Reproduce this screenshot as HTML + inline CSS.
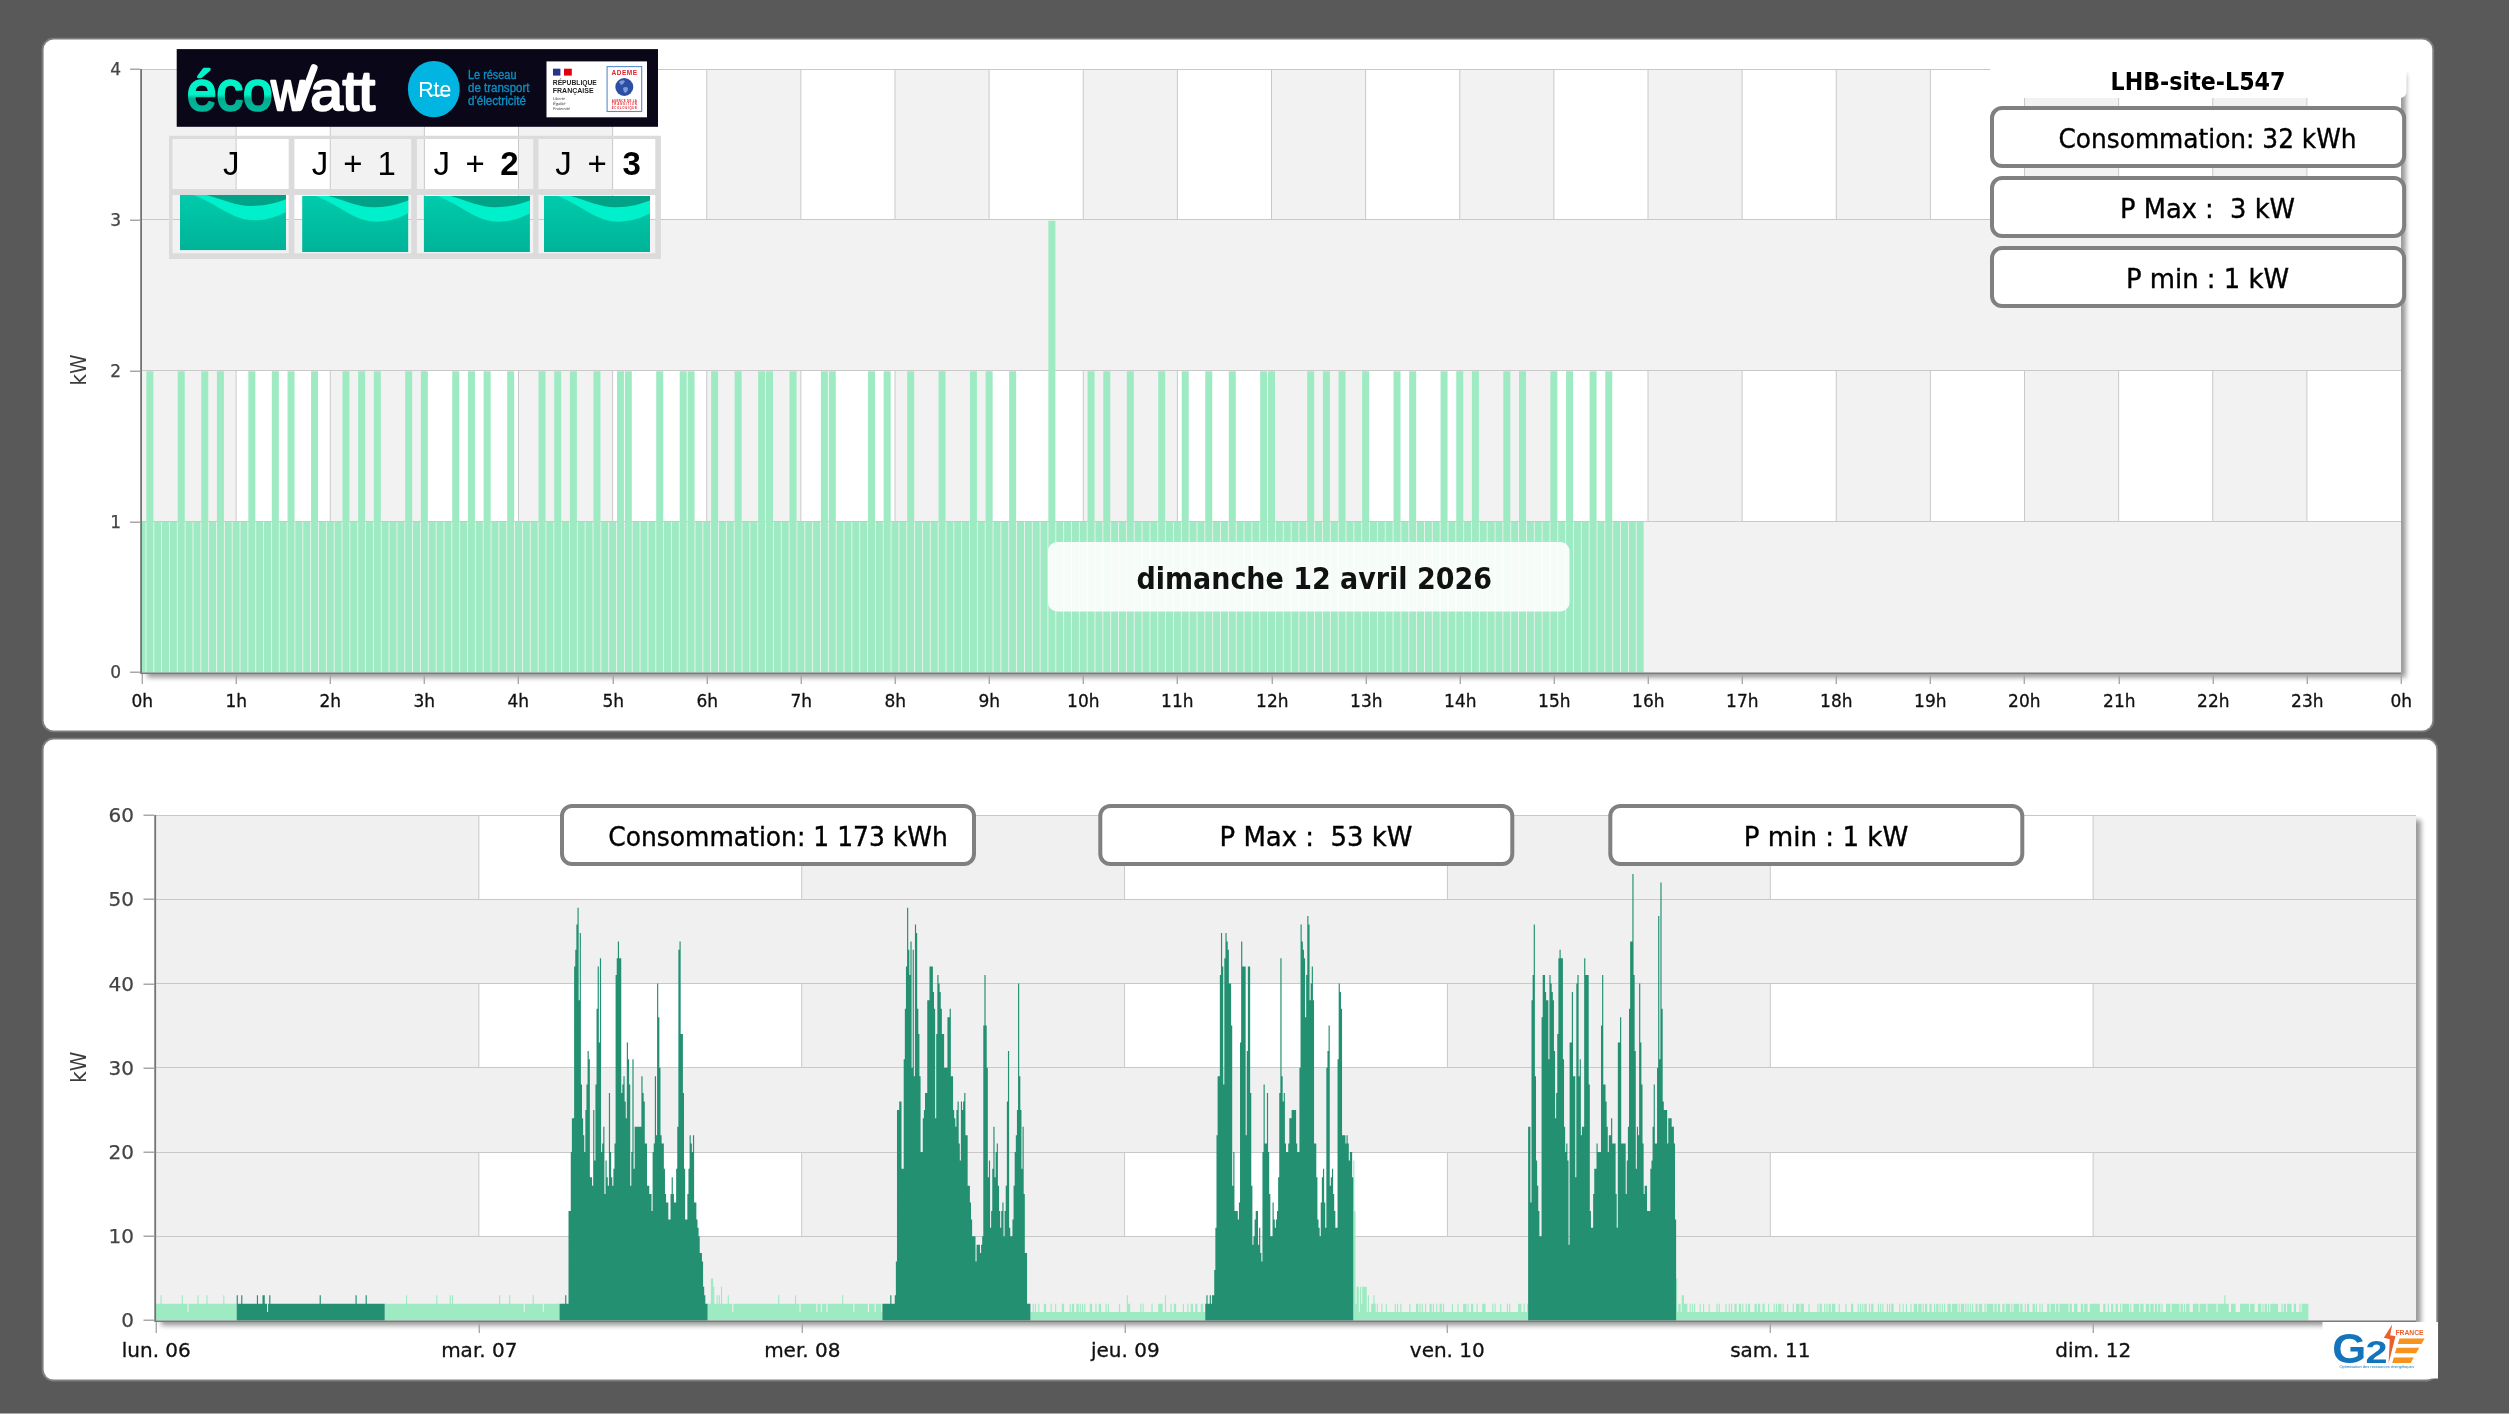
<!DOCTYPE html>
<html lang="fr"><head><meta charset="utf-8"><title>LHB-site-L547</title>
<style>html,body{margin:0;padding:0;background:#fff;overflow:hidden}svg{display:block}text{white-space:pre}</style></head><body>
<svg width="2511" height="1415" viewBox="0 0 2511 1415" style="will-change:transform">
<defs>
<filter id="sh" x="-2%" y="-2%" width="104%" height="106%"><feGaussianBlur in="SourceAlpha" stdDeviation="2.8"/><feOffset dx="4.5" dy="4.5"/><feComponentTransfer><feFuncA type="linear" slope="0.40"/></feComponentTransfer><feMerge><feMergeNode/><feMergeNode in="SourceGraphic"/></feMerge></filter>
<linearGradient id="tg" x1="0" y1="0" x2="0" y2="1"><stop offset="0" stop-color="#00cbab"/><stop offset="1" stop-color="#00b398"/></linearGradient>
<linearGradient id="eg" x1="0" y1="0" x2="0" y2="1"><stop offset="0" stop-color="#00f2c9"/><stop offset="0.55" stop-color="#00f2c9"/><stop offset="0.62" stop-color="#00ad90"/><stop offset="1" stop-color="#00c4a4"/></linearGradient>
<g id="wave"><rect width="106" height="55" fill="url(#tg)"/><path d="M13.5 0 C38 9 52 25.5 75 25.2 C89 25 98 21 106 17 L106 0 Z" fill="#00f0cb"/><path d="M26.5 0 C46 5.5 57 11.3 72 11 C86 10.7 96 8 106 4.3 L106 0 Z" fill="#00a387"/></g>
</defs>
<rect width="2511" height="1415" fill="#fff"/>
<rect width="2509" height="1413.5" fill="#595959"/>
<rect x="41.7" y="37.7" width="2392.5000000000005" height="694.5999999999999" rx="11.8" fill="#7e7e7e"/>
<rect x="43.6" y="39.6" width="2388.7000000000003" height="690.8" rx="10" fill="#fff"/>
<rect x="41.7" y="737.7" width="2396.5000000000005" height="643.7999999999998" rx="11.8" fill="#7e7e7e"/>
<rect x="43.6" y="739.6" width="2392.7000000000003" height="639.9999999999999" rx="10" fill="#fff"/>
<g filter="url(#sh)"><rect x="142.0" y="69.0" width="2259.0" height="603.5" fill="#fff"/></g>
<rect x="142.00" y="69.0" width="94.12" height="603.5" fill="#f2f2f2"/>
<rect x="330.25" y="69.0" width="94.12" height="603.5" fill="#f2f2f2"/>
<rect x="518.50" y="69.0" width="94.12" height="603.5" fill="#f2f2f2"/>
<rect x="706.75" y="69.0" width="94.12" height="603.5" fill="#f2f2f2"/>
<rect x="895.00" y="69.0" width="94.12" height="603.5" fill="#f2f2f2"/>
<rect x="1083.25" y="69.0" width="94.12" height="603.5" fill="#f2f2f2"/>
<rect x="1271.50" y="69.0" width="94.12" height="603.5" fill="#f2f2f2"/>
<rect x="1459.75" y="69.0" width="94.12" height="603.5" fill="#f2f2f2"/>
<rect x="1648.00" y="69.0" width="94.12" height="603.5" fill="#f2f2f2"/>
<rect x="1836.25" y="69.0" width="94.12" height="603.5" fill="#f2f2f2"/>
<rect x="2024.50" y="69.0" width="94.12" height="603.5" fill="#f2f2f2"/>
<rect x="2212.75" y="69.0" width="94.12" height="603.5" fill="#f2f2f2"/>
<path d="M236.12 69.0V672.5M330.25 69.0V672.5M424.38 69.0V672.5M518.50 69.0V672.5M612.62 69.0V672.5M706.75 69.0V672.5M800.88 69.0V672.5M895.00 69.0V672.5M989.12 69.0V672.5M1083.25 69.0V672.5M1177.38 69.0V672.5M1271.50 69.0V672.5M1365.62 69.0V672.5M1459.75 69.0V672.5M1553.88 69.0V672.5M1648.00 69.0V672.5M1742.12 69.0V672.5M1836.25 69.0V672.5M1930.38 69.0V672.5M2024.50 69.0V672.5M2118.62 69.0V672.5M2212.75 69.0V672.5M2306.88 69.0V672.5" stroke="#c9c9c9" stroke-width="1" fill="none"/>
<rect x="142.0" y="219.88" width="2259.0" height="150.88" fill="#f2f2f2"/>
<rect x="142.0" y="521.62" width="2259.0" height="150.88" fill="#f2f2f2"/>
<path d="M142.0 69.5H2401.0M142.0 219.5H2401.0M142.0 370.5H2401.0M142.0 521.5H2401.0" stroke="#c9c9c9" stroke-width="1" fill="none"/>
<path d="M142.00 672.5V521.90H145.50V672.5ZM146.34 672.5V371.30H153.35V672.5ZM154.19 672.5V521.90H161.19V672.5ZM162.03 672.5V521.90H169.03V672.5ZM169.87 672.5V521.90H176.88V672.5ZM177.72 672.5V371.30H184.72V672.5ZM185.56 672.5V521.90H192.56V672.5ZM193.40 672.5V521.90H200.41V672.5ZM201.25 672.5V371.30H208.25V672.5ZM209.09 672.5V521.90H216.10V672.5ZM216.94 672.5V371.30H223.94V672.5ZM224.78 672.5V521.90H231.78V672.5ZM232.62 672.5V521.90H239.63V672.5ZM240.47 672.5V521.90H247.47V672.5ZM248.31 672.5V371.30H255.31V672.5ZM256.15 672.5V521.90H263.16V672.5ZM264.00 672.5V521.90H271.00V672.5ZM271.84 672.5V371.30H278.85V672.5ZM279.69 672.5V521.90H286.69V672.5ZM287.53 672.5V371.30H294.53V672.5ZM295.37 672.5V521.90H302.38V672.5ZM303.22 672.5V521.90H310.22V672.5ZM311.06 672.5V371.30H318.06V672.5ZM318.90 672.5V521.90H325.91V672.5ZM326.75 672.5V521.90H333.75V672.5ZM334.59 672.5V521.90H341.60V672.5ZM342.44 672.5V371.30H349.44V672.5ZM350.28 672.5V521.90H357.28V672.5ZM358.12 672.5V371.30H365.13V672.5ZM365.97 672.5V521.90H372.97V672.5ZM373.81 672.5V371.30H380.81V672.5ZM381.65 672.5V521.90H388.66V672.5ZM389.50 672.5V521.90H396.50V672.5ZM397.34 672.5V521.90H404.35V672.5ZM405.19 672.5V371.30H412.19V672.5ZM413.03 672.5V521.90H420.03V672.5ZM420.87 672.5V371.30H427.88V672.5ZM428.72 672.5V521.90H435.72V672.5ZM436.56 672.5V521.90H443.56V672.5ZM444.40 672.5V521.90H451.41V672.5ZM452.25 672.5V371.30H459.25V672.5ZM460.09 672.5V521.90H467.10V672.5ZM467.94 672.5V371.30H474.94V672.5ZM475.78 672.5V521.90H482.78V672.5ZM483.62 672.5V371.30H490.63V672.5ZM491.47 672.5V521.90H498.47V672.5ZM499.31 672.5V521.90H506.31V672.5ZM507.15 672.5V371.30H514.16V672.5ZM515.00 672.5V521.90H522.00V672.5ZM522.84 672.5V521.90H529.85V672.5ZM530.69 672.5V521.90H537.69V672.5ZM538.53 672.5V371.30H545.53V672.5ZM546.37 672.5V521.90H553.38V672.5ZM554.22 672.5V371.30H561.22V672.5ZM562.06 672.5V521.90H569.06V672.5ZM569.90 672.5V371.30H576.91V672.5ZM577.75 672.5V521.90H584.75V672.5ZM585.59 672.5V521.90H592.60V672.5ZM593.44 672.5V371.30H600.44V672.5ZM601.28 672.5V521.90H608.28V672.5ZM609.12 672.5V521.90H616.13V672.5ZM616.97 672.5V371.30H623.97V672.5ZM624.81 672.5V371.30H631.81V672.5ZM632.65 672.5V521.90H639.66V672.5ZM640.50 672.5V521.90H647.50V672.5ZM648.34 672.5V521.90H655.35V672.5ZM656.19 672.5V371.30H663.19V672.5ZM664.03 672.5V521.90H671.03V672.5ZM671.87 672.5V521.90H678.88V672.5ZM679.72 672.5V371.30H686.72V672.5ZM687.56 672.5V371.30H694.56V672.5ZM695.40 672.5V521.90H702.41V672.5ZM703.25 672.5V521.90H710.25V672.5ZM711.09 672.5V371.30H718.10V672.5ZM718.94 672.5V521.90H725.94V672.5ZM726.78 672.5V521.90H733.78V672.5ZM734.62 672.5V371.30H741.63V672.5ZM742.47 672.5V521.90H749.47V672.5ZM750.31 672.5V521.90H757.31V672.5ZM758.15 672.5V371.30H765.16V672.5ZM766.00 672.5V371.30H773.00V672.5ZM773.84 672.5V521.90H780.85V672.5ZM781.69 672.5V521.90H788.69V672.5ZM789.53 672.5V371.30H796.53V672.5ZM797.37 672.5V521.90H804.38V672.5ZM805.22 672.5V521.90H812.22V672.5ZM813.06 672.5V521.90H820.06V672.5ZM820.90 672.5V371.30H827.91V672.5ZM828.75 672.5V371.30H835.75V672.5ZM836.59 672.5V521.90H843.60V672.5ZM844.44 672.5V521.90H851.44V672.5ZM852.28 672.5V521.90H859.28V672.5ZM860.12 672.5V521.90H867.13V672.5ZM867.97 672.5V371.30H874.97V672.5ZM875.81 672.5V521.90H882.81V672.5ZM883.65 672.5V371.30H890.66V672.5ZM891.50 672.5V521.90H898.50V672.5ZM899.34 672.5V521.90H906.35V672.5ZM907.19 672.5V371.30H914.19V672.5ZM915.03 672.5V521.90H922.03V672.5ZM922.87 672.5V521.90H929.88V672.5ZM930.72 672.5V521.90H937.72V672.5ZM938.56 672.5V371.30H945.56V672.5ZM946.40 672.5V521.90H953.41V672.5ZM954.25 672.5V521.90H961.25V672.5ZM962.09 672.5V521.90H969.10V672.5ZM969.94 672.5V371.30H976.94V672.5ZM977.78 672.5V521.90H984.78V672.5ZM985.62 672.5V371.30H992.63V672.5ZM993.47 672.5V521.90H1000.47V672.5ZM1001.31 672.5V521.90H1008.31V672.5ZM1009.15 672.5V371.30H1016.16V672.5ZM1017.00 672.5V521.90H1024.00V672.5ZM1024.84 672.5V521.90H1031.85V672.5ZM1032.69 672.5V521.90H1039.69V672.5ZM1040.53 672.5V521.90H1047.53V672.5ZM1048.37 672.5V220.70H1055.38V672.5ZM1056.22 672.5V521.90H1063.22V672.5ZM1064.06 672.5V521.90H1071.06V672.5ZM1071.90 672.5V521.90H1078.91V672.5ZM1079.75 672.5V521.90H1086.75V672.5ZM1087.59 672.5V371.30H1094.60V672.5ZM1095.44 672.5V521.90H1102.44V672.5ZM1103.28 672.5V371.30H1110.28V672.5ZM1111.12 672.5V521.90H1118.13V672.5ZM1118.97 672.5V521.90H1125.97V672.5ZM1126.81 672.5V371.30H1133.81V672.5ZM1134.65 672.5V521.90H1141.66V672.5ZM1142.50 672.5V521.90H1149.50V672.5ZM1150.34 672.5V521.90H1157.35V672.5ZM1158.19 672.5V371.30H1165.19V672.5ZM1166.03 672.5V521.90H1173.03V672.5ZM1173.87 672.5V521.90H1180.88V672.5ZM1181.72 672.5V371.30H1188.72V672.5ZM1189.56 672.5V521.90H1196.56V672.5ZM1197.40 672.5V521.90H1204.41V672.5ZM1205.25 672.5V371.30H1212.25V672.5ZM1213.09 672.5V521.90H1220.10V672.5ZM1220.94 672.5V521.90H1227.94V672.5ZM1228.78 672.5V371.30H1235.78V672.5ZM1236.62 672.5V521.90H1243.63V672.5ZM1244.47 672.5V521.90H1251.47V672.5ZM1252.31 672.5V521.90H1259.31V672.5ZM1260.15 672.5V371.30H1267.16V672.5ZM1268.00 672.5V371.30H1275.00V672.5ZM1275.84 672.5V521.90H1282.85V672.5ZM1283.69 672.5V521.90H1290.69V672.5ZM1291.53 672.5V521.90H1298.53V672.5ZM1299.37 672.5V521.90H1306.38V672.5ZM1307.22 672.5V371.30H1314.22V672.5ZM1315.06 672.5V521.90H1322.06V672.5ZM1322.90 672.5V371.30H1329.91V672.5ZM1330.75 672.5V521.90H1337.75V672.5ZM1338.59 672.5V371.30H1345.60V672.5ZM1346.44 672.5V521.90H1353.44V672.5ZM1354.28 672.5V521.90H1361.28V672.5ZM1362.12 672.5V371.30H1369.13V672.5ZM1369.97 672.5V521.90H1376.97V672.5ZM1377.81 672.5V521.90H1384.81V672.5ZM1385.65 672.5V521.90H1392.66V672.5ZM1393.50 672.5V371.30H1400.50V672.5ZM1401.34 672.5V521.90H1408.35V672.5ZM1409.19 672.5V371.30H1416.19V672.5ZM1417.03 672.5V521.90H1424.03V672.5ZM1424.87 672.5V521.90H1431.88V672.5ZM1432.72 672.5V521.90H1439.72V672.5ZM1440.56 672.5V371.30H1447.56V672.5ZM1448.40 672.5V521.90H1455.41V672.5ZM1456.25 672.5V371.30H1463.25V672.5ZM1464.09 672.5V521.90H1471.10V672.5ZM1471.94 672.5V371.30H1478.94V672.5ZM1479.78 672.5V521.90H1486.78V672.5ZM1487.62 672.5V521.90H1494.63V672.5ZM1495.47 672.5V521.90H1502.47V672.5ZM1503.31 672.5V371.30H1510.31V672.5ZM1511.15 672.5V521.90H1518.16V672.5ZM1519.00 672.5V371.30H1526.00V672.5ZM1526.84 672.5V521.90H1533.85V672.5ZM1534.69 672.5V521.90H1541.69V672.5ZM1542.53 672.5V521.90H1549.53V672.5ZM1550.37 672.5V371.30H1557.38V672.5ZM1558.22 672.5V521.90H1565.22V672.5ZM1566.06 672.5V371.30H1573.06V672.5ZM1573.90 672.5V521.90H1580.91V672.5ZM1581.75 672.5V521.90H1588.75V672.5ZM1589.59 672.5V371.30H1596.60V672.5ZM1597.44 672.5V521.90H1604.44V672.5ZM1605.28 672.5V371.30H1612.28V672.5ZM1613.12 672.5V521.90H1620.13V672.5ZM1620.97 672.5V521.90H1627.97V672.5ZM1628.81 672.5V521.90H1635.81V672.5ZM1636.65 672.5V521.90H1643.66V672.5Z" fill="#9eebc3"/>
<path d="M141.1 69.0V673.3" stroke="#737373" stroke-width="1.8" fill="none"/>
<path d="M140.2 673.2H2401.0" stroke="#7a7a7a" stroke-width="1.6" fill="none"/>
<text x="121" y="678.3" text-anchor="end" font-family="DejaVu Sans, Verdana, sans-serif" font-size="17" fill="#444" stroke="#444" stroke-width="0.25">0</text>
<text x="121" y="528.3" text-anchor="end" font-family="DejaVu Sans, Verdana, sans-serif" font-size="17" fill="#444" stroke="#444" stroke-width="0.25">1</text>
<text x="121" y="377.3" text-anchor="end" font-family="DejaVu Sans, Verdana, sans-serif" font-size="17" fill="#444" stroke="#444" stroke-width="0.25">2</text>
<text x="121" y="226.3" text-anchor="end" font-family="DejaVu Sans, Verdana, sans-serif" font-size="17" fill="#444" stroke="#444" stroke-width="0.25">3</text>
<text x="121" y="75.3" text-anchor="end" font-family="DejaVu Sans, Verdana, sans-serif" font-size="17" fill="#444" stroke="#444" stroke-width="0.25">4</text>
<path d="M130.0 672.2H140.2M130.0 522.2H140.2M130.0 371.2H140.2M130.0 220.2H140.2M130.0 69.2H140.2" stroke="#a8a8a8" stroke-width="1.5" fill="none"/>
<text x="142.3" y="707" text-anchor="middle" font-family="DejaVu Sans, Verdana, sans-serif" font-size="17" fill="#111" stroke="#111" stroke-width="0.3">0h</text>
<text x="236.3" y="707" text-anchor="middle" font-family="DejaVu Sans, Verdana, sans-serif" font-size="17" fill="#111" stroke="#111" stroke-width="0.3">1h</text>
<text x="330.3" y="707" text-anchor="middle" font-family="DejaVu Sans, Verdana, sans-serif" font-size="17" fill="#111" stroke="#111" stroke-width="0.3">2h</text>
<text x="424.3" y="707" text-anchor="middle" font-family="DejaVu Sans, Verdana, sans-serif" font-size="17" fill="#111" stroke="#111" stroke-width="0.3">3h</text>
<text x="518.3" y="707" text-anchor="middle" font-family="DejaVu Sans, Verdana, sans-serif" font-size="17" fill="#111" stroke="#111" stroke-width="0.3">4h</text>
<text x="613.3" y="707" text-anchor="middle" font-family="DejaVu Sans, Verdana, sans-serif" font-size="17" fill="#111" stroke="#111" stroke-width="0.3">5h</text>
<text x="707.3" y="707" text-anchor="middle" font-family="DejaVu Sans, Verdana, sans-serif" font-size="17" fill="#111" stroke="#111" stroke-width="0.3">6h</text>
<text x="801.3" y="707" text-anchor="middle" font-family="DejaVu Sans, Verdana, sans-serif" font-size="17" fill="#111" stroke="#111" stroke-width="0.3">7h</text>
<text x="895.3" y="707" text-anchor="middle" font-family="DejaVu Sans, Verdana, sans-serif" font-size="17" fill="#111" stroke="#111" stroke-width="0.3">8h</text>
<text x="989.3" y="707" text-anchor="middle" font-family="DejaVu Sans, Verdana, sans-serif" font-size="17" fill="#111" stroke="#111" stroke-width="0.3">9h</text>
<text x="1083.3" y="707" text-anchor="middle" font-family="DejaVu Sans, Verdana, sans-serif" font-size="17" fill="#111" stroke="#111" stroke-width="0.3">10h</text>
<text x="1177.3" y="707" text-anchor="middle" font-family="DejaVu Sans, Verdana, sans-serif" font-size="17" fill="#111" stroke="#111" stroke-width="0.3">11h</text>
<text x="1272.3" y="707" text-anchor="middle" font-family="DejaVu Sans, Verdana, sans-serif" font-size="17" fill="#111" stroke="#111" stroke-width="0.3">12h</text>
<text x="1366.3" y="707" text-anchor="middle" font-family="DejaVu Sans, Verdana, sans-serif" font-size="17" fill="#111" stroke="#111" stroke-width="0.3">13h</text>
<text x="1460.3" y="707" text-anchor="middle" font-family="DejaVu Sans, Verdana, sans-serif" font-size="17" fill="#111" stroke="#111" stroke-width="0.3">14h</text>
<text x="1554.3" y="707" text-anchor="middle" font-family="DejaVu Sans, Verdana, sans-serif" font-size="17" fill="#111" stroke="#111" stroke-width="0.3">15h</text>
<text x="1648.3" y="707" text-anchor="middle" font-family="DejaVu Sans, Verdana, sans-serif" font-size="17" fill="#111" stroke="#111" stroke-width="0.3">16h</text>
<text x="1742.3" y="707" text-anchor="middle" font-family="DejaVu Sans, Verdana, sans-serif" font-size="17" fill="#111" stroke="#111" stroke-width="0.3">17h</text>
<text x="1836.3" y="707" text-anchor="middle" font-family="DejaVu Sans, Verdana, sans-serif" font-size="17" fill="#111" stroke="#111" stroke-width="0.3">18h</text>
<text x="1930.3" y="707" text-anchor="middle" font-family="DejaVu Sans, Verdana, sans-serif" font-size="17" fill="#111" stroke="#111" stroke-width="0.3">19h</text>
<text x="2024.3" y="707" text-anchor="middle" font-family="DejaVu Sans, Verdana, sans-serif" font-size="17" fill="#111" stroke="#111" stroke-width="0.3">20h</text>
<text x="2119.3" y="707" text-anchor="middle" font-family="DejaVu Sans, Verdana, sans-serif" font-size="17" fill="#111" stroke="#111" stroke-width="0.3">21h</text>
<text x="2213.3" y="707" text-anchor="middle" font-family="DejaVu Sans, Verdana, sans-serif" font-size="17" fill="#111" stroke="#111" stroke-width="0.3">22h</text>
<text x="2307.3" y="707" text-anchor="middle" font-family="DejaVu Sans, Verdana, sans-serif" font-size="17" fill="#111" stroke="#111" stroke-width="0.3">23h</text>
<text x="2401.3" y="707" text-anchor="middle" font-family="DejaVu Sans, Verdana, sans-serif" font-size="17" fill="#111" stroke="#111" stroke-width="0.3">0h</text>
<path d="M142.3 674.0V684.0M236.3 674.0V684.0M330.3 674.0V684.0M424.3 674.0V684.0M518.3 674.0V684.0M613.3 674.0V684.0M707.3 674.0V684.0M801.3 674.0V684.0M895.3 674.0V684.0M989.3 674.0V684.0M1083.3 674.0V684.0M1177.3 674.0V684.0M1272.3 674.0V684.0M1366.3 674.0V684.0M1460.3 674.0V684.0M1554.3 674.0V684.0M1648.3 674.0V684.0M1742.3 674.0V684.0M1836.3 674.0V684.0M1930.3 674.0V684.0M2024.3 674.0V684.0M2119.3 674.0V684.0M2213.3 674.0V684.0M2307.3 674.0V684.0M2401.3 674.0V684.0" stroke="#a8a8a8" stroke-width="1.4" fill="none"/>
<text transform="translate(85.8 370) rotate(-90)" text-anchor="middle" font-family="DejaVu Sans Condensed, DejaVu Sans, Tahoma, sans-serif" font-size="22" textLength="31" lengthAdjust="spacingAndGlyphs" fill="#3c3c3c">kW</text>
<path d="M1990.2 58H2406.5V91Q2406.5 98 2399.5 98H1990.2Z" fill="#fff"/>
<text x="2198" y="89.8" text-anchor="middle" font-family="DejaVu Sans Condensed, DejaVu Sans, Tahoma, sans-serif" font-weight="bold" font-size="25" textLength="175" lengthAdjust="spacingAndGlyphs" fill="#000">LHB-site-L547</text>
<rect x="1992" y="108.1" width="412.0999999999999" height="58.0" rx="10" fill="#fff" stroke="#808080" stroke-width="4"/>
<text x="2207.5" y="148.1" text-anchor="middle" font-family="DejaVu Sans Condensed, DejaVu Sans, Tahoma, sans-serif" font-size="27" textLength="298" lengthAdjust="spacingAndGlyphs" fill="#000" stroke="#000" stroke-width="0.35">Consommation: 32 kWh</text>
<rect x="1992" y="178.1" width="412.0999999999999" height="58.0" rx="10" fill="#fff" stroke="#808080" stroke-width="4"/>
<text x="2207.5" y="218.1" text-anchor="middle" font-family="DejaVu Sans Condensed, DejaVu Sans, Tahoma, sans-serif" font-size="27" textLength="175" lengthAdjust="spacingAndGlyphs" fill="#000" stroke="#000" stroke-width="0.35">P Max :  3 kW</text>
<rect x="1992" y="248.1" width="412.0999999999999" height="58.00000000000003" rx="10" fill="#fff" stroke="#808080" stroke-width="4"/>
<text x="2207.5" y="288.1" text-anchor="middle" font-family="DejaVu Sans Condensed, DejaVu Sans, Tahoma, sans-serif" font-size="27" textLength="163" lengthAdjust="spacingAndGlyphs" fill="#000" stroke="#000" stroke-width="0.35">P min : 1 kW</text>
<rect x="1048" y="542" width="521.5" height="69.5" rx="9" fill="#fff" fill-opacity="0.9"/>
<text x="1314.2" y="589.2" text-anchor="middle" font-family="DejaVu Sans Condensed, DejaVu Sans, Tahoma, sans-serif" font-weight="bold" font-size="30" textLength="355.5" lengthAdjust="spacingAndGlyphs" fill="#111">dimanche 12 avril 2026</text>
<g id="ecowatt">
<rect x="176.7" y="49.1" width="481.3" height="77.7" fill="#0a0818"/>
<text y="110.4" font-family="Liberation Sans, Arial, sans-serif" font-size="55.5" stroke-width="2.6" stroke-linejoin="round" stroke-linecap="round"><tspan x="187" textLength="85.5" lengthAdjust="spacingAndGlyphs" fill="url(#eg)" stroke="url(#eg)">éco</tspan><tspan x="271.3" textLength="33" lengthAdjust="spacingAndGlyphs" fill="#fff" stroke="#fff">w</tspan><tspan x="310.5" textLength="64.5" lengthAdjust="spacingAndGlyphs" fill="#fff" stroke="#fff">att</tspan></text>
<path d="M299.3 107.5L314 67.8" stroke="#fff" stroke-width="7.2" stroke-linecap="round" fill="none"/>
<ellipse cx="433.8" cy="89.1" rx="25.9" ry="28.2" fill="#00b5e2"/>
<text x="418.2" y="96.7" font-family="Liberation Sans, Arial, sans-serif" font-size="22.8" textLength="33" lengthAdjust="spacingAndGlyphs" fill="#fff">Rte</text>
<path d="M430 95.2H450" stroke="#fff" stroke-width="1.3" fill="none"/>
<text x="468" y="78.8" font-family="Liberation Sans, Arial, sans-serif" font-size="12" textLength="48.5" lengthAdjust="spacingAndGlyphs" fill="#0b8fc4" stroke="#0b8fc4" stroke-width="0.35">Le réseau</text>
<text x="468" y="92" font-family="Liberation Sans, Arial, sans-serif" font-size="12" textLength="61.5" lengthAdjust="spacingAndGlyphs" fill="#0b8fc4" stroke="#0b8fc4" stroke-width="0.35">de transport</text>
<text x="468" y="105.2" font-family="Liberation Sans, Arial, sans-serif" font-size="12" textLength="58" lengthAdjust="spacingAndGlyphs" fill="#0b8fc4" stroke="#0b8fc4" stroke-width="0.35">d'électricité</text>
<rect x="546.5" y="61.4" width="100.5" height="55.9" fill="#fff"/>
<rect x="553" y="68.7" width="7.4" height="6.9" fill="#27348b"/><rect x="564" y="68.7" width="7.8" height="6.9" fill="#e1000f"/>
<text x="552.8" y="84.6" font-family="Liberation Sans, Arial, sans-serif" font-weight="bold" font-size="7.4" textLength="44" lengthAdjust="spacingAndGlyphs" fill="#1e1e1e">RÉPUBLIQUE</text>
<text x="552.8" y="93" font-family="Liberation Sans, Arial, sans-serif" font-weight="bold" font-size="7.4" textLength="40.8" lengthAdjust="spacingAndGlyphs" fill="#1e1e1e">FRANÇAISE</text>
<text x="553" y="99.9" font-family="Liberation Sans, Arial, sans-serif" font-style="italic" font-size="4.2" textLength="12" lengthAdjust="spacingAndGlyphs" fill="#444">Liberté</text>
<text x="553" y="104.9" font-family="Liberation Sans, Arial, sans-serif" font-style="italic" font-size="4.2" textLength="12.5" lengthAdjust="spacingAndGlyphs" fill="#444">Égalité</text>
<text x="553" y="109.9" font-family="Liberation Sans, Arial, sans-serif" font-style="italic" font-size="4.2" textLength="17" lengthAdjust="spacingAndGlyphs" fill="#444">Fraternité</text>
<rect x="607.1" y="66.6" width="34.6" height="44.9" fill="#fff" stroke="#5a8bd0" stroke-width="1.1"/>
<text x="624.3" y="74.8" text-anchor="middle" font-family="Liberation Sans, Arial, sans-serif" font-weight="bold" font-size="6.5" textLength="25.5" lengthAdjust="spacing" fill="#e6212a">ADEME</text>
<circle cx="624.3" cy="87" r="9" fill="#2c4fa6"/><path d="M619 82q3-3 6-1q-1 3-4 4zM623 88q3-2 5 0q0 4-3 5q-2-2-2-5z" fill="#7f9ad6"/>
<text x="624.3" y="101.5" text-anchor="middle" font-family="Liberation Sans, Arial, sans-serif" font-weight="bold" font-size="2.9" textLength="25.3" lengthAdjust="spacing" fill="#e6212a">AGENCE DE LA</text>
<text x="624.3" y="105.1" text-anchor="middle" font-family="Liberation Sans, Arial, sans-serif" font-weight="bold" font-size="2.9" textLength="25.3" lengthAdjust="spacing" fill="#e6212a">TRANSITION</text>
<text x="624.3" y="108.6" text-anchor="middle" font-family="Liberation Sans, Arial, sans-serif" font-weight="bold" font-size="2.9" textLength="25.3" lengthAdjust="spacing" fill="#e6212a">ÉCOLOGIQUE</text>
<path d="M169.1 135.7H660.9V258.9H169.1ZM172.5 139.1V189.0H288.7V139.1ZM172.5 195.1V253.2H288.7V195.1ZM294.4 139.1V189.0H411.2V139.1ZM294.4 195.1V253.2H411.2V195.1ZM416.9 139.1V189.0H533.2V139.1ZM416.9 195.1V253.2H533.2V195.1ZM538.4 139.1V189.0H655.3V139.1ZM538.4 195.1V253.2H655.3V195.1Z" fill="#dbdbdb" fill-rule="evenodd"/>
<text x="223" y="174.8" font-family="Liberation Sans, Arial, sans-serif" font-size="33" fill="#000">J</text>
<text x="311.8" y="174.8" font-family="Liberation Sans, Arial, sans-serif" font-size="33" textLength="84" lengthAdjust="spacing" fill="#000">J + <tspan>1</tspan></text>
<text x="433.5" y="174.8" font-family="Liberation Sans, Arial, sans-serif" font-size="33" textLength="85" lengthAdjust="spacing" fill="#000">J + <tspan font-weight="bold">2</tspan></text>
<text x="555.3" y="174.8" font-family="Liberation Sans, Arial, sans-serif" font-size="33" textLength="85.5" lengthAdjust="spacing" fill="#000">J + <tspan font-weight="bold">3</tspan></text>
<use href="#wave" transform="translate(180 195) scale(1 1.0018)"/>
<use href="#wave" transform="translate(302.2 196) scale(1 1.0182)"/>
<use href="#wave" transform="translate(423.9 196) scale(1 1.0182)"/>
<use href="#wave" transform="translate(544 196) scale(1 1.0182)"/>
</g>
<g filter="url(#sh)"><rect x="156.0" y="815.0" width="2260.0" height="505.5" fill="#fff"/></g>
<rect x="156.00" y="815.0" width="322.86" height="505.5" fill="#f0f0f0"/>
<rect x="801.71" y="815.0" width="322.86" height="505.5" fill="#f0f0f0"/>
<rect x="1447.43" y="815.0" width="322.86" height="505.5" fill="#f0f0f0"/>
<rect x="2093.14" y="815.0" width="322.86" height="505.5" fill="#f0f0f0"/>
<path d="M478.86 815.0V1320.5M801.71 815.0V1320.5M1124.57 815.0V1320.5M1447.43 815.0V1320.5M1770.29 815.0V1320.5M2093.14 815.0V1320.5" stroke="#c9c9c9" stroke-width="1" fill="none"/>
<rect x="156.0" y="899.25" width="2260.0" height="84.25" fill="#f0f0f0"/>
<rect x="156.0" y="1067.75" width="2260.0" height="84.25" fill="#f0f0f0"/>
<rect x="156.0" y="1236.25" width="2260.0" height="84.25" fill="#f0f0f0"/>
<path d="M156.0 815.5H2416.0M156.0 899.5H2416.0M156.0 983.5H2416.0M156.0 1067.5H2416.0M156.0 1152.5H2416.0M156.0 1236.5H2416.0" stroke="#c9c9c9" stroke-width="1" fill="none"/>
<path d="M155.98 1320.5V1303.7H157.14V1320.5ZM157.10 1320.5V1303.7H158.26V1320.5ZM158.22 1320.5V1303.7H159.38V1320.5ZM159.34 1320.5V1303.7H160.50V1320.5ZM160.46 1320.5V1295.2H161.63V1320.5ZM161.59 1320.5V1303.7H162.75V1320.5ZM162.71 1320.5V1303.7H163.87V1320.5ZM163.83 1320.5V1303.7H164.99V1320.5ZM164.95 1320.5V1303.7H166.11V1320.5ZM166.07 1320.5V1303.7H167.23V1320.5ZM167.19 1320.5V1303.7H168.35V1320.5ZM168.31 1320.5V1303.7H169.47V1320.5ZM169.43 1320.5V1303.7H170.59V1320.5ZM170.55 1320.5V1303.7H171.71V1320.5ZM171.67 1320.5V1303.7H172.84V1320.5ZM172.80 1320.5V1303.7H173.96V1320.5ZM173.92 1320.5V1303.7H175.08V1320.5ZM175.04 1320.5V1303.7H176.20V1320.5ZM176.16 1320.5V1303.7H177.32V1320.5ZM177.28 1320.5V1303.7H178.44V1320.5ZM178.40 1320.5V1303.7H179.56V1320.5ZM179.52 1320.5V1303.7H180.68V1320.5ZM180.64 1320.5V1303.7H181.80V1320.5ZM181.76 1320.5V1295.2H182.92V1320.5ZM182.88 1320.5V1303.7H184.05V1320.5ZM184.01 1320.5V1303.7H185.17V1320.5ZM185.13 1320.5V1303.7H186.29V1320.5ZM186.25 1320.5V1303.7H187.41V1320.5ZM187.37 1320.5V1312.1H188.53V1320.5ZM188.49 1320.5V1303.7H189.65V1320.5ZM189.61 1320.5V1303.7H190.77V1320.5ZM190.73 1320.5V1303.7H191.89V1320.5ZM191.85 1320.5V1303.7H193.01V1320.5ZM192.97 1320.5V1303.7H194.14V1320.5ZM194.10 1320.5V1303.7H195.26V1320.5ZM195.22 1320.5V1303.7H196.38V1320.5ZM196.34 1320.5V1303.7H197.50V1320.5ZM197.46 1320.5V1295.2H198.62V1320.5ZM198.58 1320.5V1303.7H199.74V1320.5ZM199.70 1320.5V1303.7H200.86V1320.5ZM200.82 1320.5V1303.7H201.98V1320.5ZM201.94 1320.5V1303.7H203.10V1320.5ZM203.06 1320.5V1303.7H204.22V1320.5ZM204.18 1320.5V1303.7H205.35V1320.5ZM205.31 1320.5V1303.7H206.47V1320.5ZM206.43 1320.5V1295.2H207.59V1320.5ZM207.55 1320.5V1303.7H208.71V1320.5ZM208.67 1320.5V1303.7H209.83V1320.5ZM209.79 1320.5V1303.7H210.95V1320.5ZM210.91 1320.5V1303.7H212.07V1320.5ZM212.03 1320.5V1303.7H213.19V1320.5ZM213.15 1320.5V1303.7H214.31V1320.5ZM214.27 1320.5V1303.7H215.43V1320.5ZM215.39 1320.5V1303.7H216.56V1320.5ZM216.52 1320.5V1303.7H217.68V1320.5ZM217.64 1320.5V1303.7H218.80V1320.5ZM218.76 1320.5V1303.7H219.92V1320.5ZM219.88 1320.5V1303.7H221.04V1320.5ZM221.00 1320.5V1303.7H222.16V1320.5ZM222.12 1320.5V1303.7H223.28V1320.5ZM223.24 1320.5V1295.2H224.40V1320.5ZM224.36 1320.5V1303.7H225.52V1320.5ZM225.48 1320.5V1303.7H226.65V1320.5ZM226.60 1320.5V1303.7H227.77V1320.5ZM227.73 1320.5V1303.7H228.89V1320.5ZM228.85 1320.5V1303.7H230.01V1320.5ZM229.97 1320.5V1303.7H231.13V1320.5ZM231.09 1320.5V1303.7H232.25V1320.5ZM232.21 1320.5V1303.7H233.37V1320.5ZM233.33 1320.5V1303.7H234.49V1320.5ZM234.45 1320.5V1303.7H235.61V1320.5ZM235.57 1320.5V1303.7H236.73V1320.5ZM384.67 1320.5V1303.7H385.83V1320.5ZM385.79 1320.5V1303.7H386.95V1320.5ZM386.91 1320.5V1303.7H388.07V1320.5ZM388.03 1320.5V1303.7H389.19V1320.5ZM389.15 1320.5V1303.7H390.32V1320.5ZM390.28 1320.5V1303.7H391.44V1320.5ZM391.40 1320.5V1303.7H392.56V1320.5ZM392.52 1320.5V1303.7H393.68V1320.5ZM393.64 1320.5V1303.7H394.80V1320.5ZM394.76 1320.5V1303.7H395.92V1320.5ZM395.88 1320.5V1303.7H397.04V1320.5ZM397.00 1320.5V1303.7H398.16V1320.5ZM398.12 1320.5V1303.7H399.28V1320.5ZM399.24 1320.5V1303.7H400.40V1320.5ZM400.36 1320.5V1303.7H401.53V1320.5ZM401.49 1320.5V1303.7H402.65V1320.5ZM402.61 1320.5V1303.7H403.77V1320.5ZM403.73 1320.5V1303.7H404.89V1320.5ZM404.85 1320.5V1303.7H406.01V1320.5ZM405.97 1320.5V1295.2H407.13V1320.5ZM407.09 1320.5V1303.7H408.25V1320.5ZM408.21 1320.5V1303.7H409.37V1320.5ZM409.33 1320.5V1303.7H410.49V1320.5ZM410.45 1320.5V1303.7H411.62V1320.5ZM411.58 1320.5V1303.7H412.74V1320.5ZM412.70 1320.5V1303.7H413.86V1320.5ZM413.82 1320.5V1303.7H414.98V1320.5ZM414.94 1320.5V1303.7H416.10V1320.5ZM416.06 1320.5V1303.7H417.22V1320.5ZM417.18 1320.5V1303.7H418.34V1320.5ZM418.30 1320.5V1303.7H419.46V1320.5ZM419.42 1320.5V1303.7H420.58V1320.5ZM420.54 1320.5V1303.7H421.70V1320.5ZM421.66 1320.5V1303.7H422.83V1320.5ZM422.79 1320.5V1303.7H423.95V1320.5ZM423.91 1320.5V1303.7H425.07V1320.5ZM425.03 1320.5V1303.7H426.19V1320.5ZM426.15 1320.5V1303.7H427.31V1320.5ZM427.27 1320.5V1303.7H428.43V1320.5ZM428.39 1320.5V1303.7H429.55V1320.5ZM429.51 1320.5V1303.7H430.67V1320.5ZM430.63 1320.5V1303.7H431.79V1320.5ZM431.75 1320.5V1303.7H432.91V1320.5ZM432.87 1320.5V1303.7H434.04V1320.5ZM434.00 1320.5V1303.7H435.16V1320.5ZM435.12 1320.5V1303.7H436.28V1320.5ZM436.24 1320.5V1295.2H437.40V1320.5ZM437.36 1320.5V1303.7H438.52V1320.5ZM438.48 1320.5V1303.7H439.64V1320.5ZM439.60 1320.5V1303.7H440.76V1320.5ZM440.72 1320.5V1303.7H441.88V1320.5ZM441.84 1320.5V1303.7H443.00V1320.5ZM442.96 1320.5V1303.7H444.13V1320.5ZM444.09 1320.5V1303.7H445.25V1320.5ZM445.21 1320.5V1303.7H446.37V1320.5ZM446.33 1320.5V1303.7H447.49V1320.5ZM447.45 1320.5V1303.7H448.61V1320.5ZM448.57 1320.5V1303.7H449.73V1320.5ZM449.69 1320.5V1295.2H450.85V1320.5ZM450.81 1320.5V1303.7H451.97V1320.5ZM451.93 1320.5V1295.2H453.09V1320.5ZM453.05 1320.5V1303.7H454.21V1320.5ZM454.17 1320.5V1303.7H455.34V1320.5ZM455.30 1320.5V1303.7H456.46V1320.5ZM456.42 1320.5V1303.7H457.58V1320.5ZM457.54 1320.5V1303.7H458.70V1320.5ZM458.66 1320.5V1303.7H459.82V1320.5ZM459.78 1320.5V1303.7H460.94V1320.5ZM460.90 1320.5V1303.7H462.06V1320.5ZM462.02 1320.5V1303.7H463.18V1320.5ZM463.14 1320.5V1303.7H464.30V1320.5ZM464.26 1320.5V1303.7H465.42V1320.5ZM465.38 1320.5V1303.7H466.55V1320.5ZM466.51 1320.5V1303.7H467.67V1320.5ZM467.63 1320.5V1303.7H468.79V1320.5ZM468.75 1320.5V1303.7H469.91V1320.5ZM469.87 1320.5V1303.7H471.03V1320.5ZM470.99 1320.5V1303.7H472.15V1320.5ZM472.11 1320.5V1303.7H473.27V1320.5ZM473.23 1320.5V1303.7H474.39V1320.5ZM474.35 1320.5V1303.7H475.51V1320.5ZM475.47 1320.5V1303.7H476.64V1320.5ZM476.60 1320.5V1303.7H477.76V1320.5ZM477.72 1320.5V1303.7H478.88V1320.5ZM478.84 1320.5V1303.7H480.00V1320.5ZM479.96 1320.5V1303.7H481.12V1320.5ZM481.08 1320.5V1303.7H482.24V1320.5ZM482.20 1320.5V1303.7H483.36V1320.5ZM483.32 1320.5V1303.7H484.48V1320.5ZM484.44 1320.5V1303.7H485.60V1320.5ZM485.56 1320.5V1303.7H486.72V1320.5ZM486.68 1320.5V1303.7H487.85V1320.5ZM487.81 1320.5V1303.7H488.97V1320.5ZM488.93 1320.5V1303.7H490.09V1320.5ZM490.05 1320.5V1303.7H491.21V1320.5ZM491.17 1320.5V1303.7H492.33V1320.5ZM492.29 1320.5V1303.7H493.45V1320.5ZM493.41 1320.5V1303.7H494.57V1320.5ZM494.53 1320.5V1303.7H495.69V1320.5ZM495.65 1320.5V1303.7H496.81V1320.5ZM496.77 1320.5V1303.7H497.93V1320.5ZM497.89 1320.5V1303.7H499.06V1320.5ZM499.02 1320.5V1295.2H500.18V1320.5ZM500.14 1320.5V1303.7H501.30V1320.5ZM501.26 1320.5V1303.7H502.42V1320.5ZM502.38 1320.5V1303.7H503.54V1320.5ZM503.50 1320.5V1303.7H504.66V1320.5ZM504.62 1320.5V1303.7H505.78V1320.5ZM505.74 1320.5V1303.7H506.90V1320.5ZM506.86 1320.5V1303.7H508.02V1320.5ZM507.98 1320.5V1303.7H509.14V1320.5ZM509.11 1320.5V1295.2H510.27V1320.5ZM510.23 1320.5V1303.7H511.39V1320.5ZM511.35 1320.5V1303.7H512.51V1320.5ZM512.47 1320.5V1303.7H513.63V1320.5ZM513.59 1320.5V1303.7H514.75V1320.5ZM514.71 1320.5V1303.7H515.87V1320.5ZM515.83 1320.5V1303.7H516.99V1320.5ZM516.95 1320.5V1303.7H518.11V1320.5ZM518.07 1320.5V1303.7H519.23V1320.5ZM519.19 1320.5V1303.7H520.36V1320.5ZM520.32 1320.5V1303.7H521.48V1320.5ZM521.44 1320.5V1303.7H522.60V1320.5ZM522.56 1320.5V1303.7H523.72V1320.5ZM523.68 1320.5V1312.1H524.84V1320.5ZM524.80 1320.5V1303.7H525.96V1320.5ZM525.92 1320.5V1303.7H527.08V1320.5ZM527.04 1320.5V1303.7H528.20V1320.5ZM528.16 1320.5V1303.7H529.32V1320.5ZM529.28 1320.5V1303.7H530.44V1320.5ZM530.40 1320.5V1303.7H531.57V1320.5ZM531.53 1320.5V1303.7H532.69V1320.5ZM532.65 1320.5V1295.2H533.81V1320.5ZM533.77 1320.5V1303.7H534.93V1320.5ZM534.89 1320.5V1303.7H536.05V1320.5ZM536.01 1320.5V1303.7H537.17V1320.5ZM537.13 1320.5V1303.7H538.29V1320.5ZM538.25 1320.5V1303.7H539.41V1320.5ZM539.37 1320.5V1303.7H540.53V1320.5ZM540.49 1320.5V1303.7H541.65V1320.5ZM541.61 1320.5V1303.7H542.78V1320.5ZM542.74 1320.5V1312.1H543.90V1320.5ZM543.86 1320.5V1303.7H545.02V1320.5ZM544.98 1320.5V1303.7H546.14V1320.5ZM546.10 1320.5V1303.7H547.26V1320.5ZM547.22 1320.5V1303.7H548.38V1320.5ZM548.34 1320.5V1303.7H549.50V1320.5ZM549.46 1320.5V1303.7H550.62V1320.5ZM550.58 1320.5V1303.7H551.74V1320.5ZM551.70 1320.5V1303.7H552.87V1320.5ZM552.83 1320.5V1303.7H553.99V1320.5ZM553.95 1320.5V1303.7H555.11V1320.5ZM555.07 1320.5V1303.7H556.23V1320.5ZM556.19 1320.5V1303.7H557.35V1320.5ZM557.31 1320.5V1303.7H558.47V1320.5ZM558.43 1320.5V1303.7H559.59V1320.5ZM707.53 1320.5V1303.7H708.69V1320.5ZM708.65 1320.5V1303.7H709.81V1320.5ZM709.77 1320.5V1303.7H710.93V1320.5ZM710.89 1320.5V1278.4H712.05V1320.5ZM712.01 1320.5V1278.4H713.17V1320.5ZM713.13 1320.5V1286.8H714.29V1320.5ZM714.25 1320.5V1303.7H715.41V1320.5ZM715.37 1320.5V1303.7H716.54V1320.5ZM716.50 1320.5V1295.2H717.66V1320.5ZM717.62 1320.5V1303.7H718.78V1320.5ZM718.74 1320.5V1295.2H719.90V1320.5ZM719.86 1320.5V1303.7H721.02V1320.5ZM720.98 1320.5V1286.8H722.14V1320.5ZM722.10 1320.5V1303.7H723.26V1320.5ZM723.22 1320.5V1303.7H724.38V1320.5ZM724.34 1320.5V1303.7H725.50V1320.5ZM725.46 1320.5V1303.7H726.63V1320.5ZM726.59 1320.5V1303.7H727.75V1320.5ZM727.71 1320.5V1295.2H728.87V1320.5ZM728.83 1320.5V1303.7H729.99V1320.5ZM729.95 1320.5V1303.7H731.11V1320.5ZM731.07 1320.5V1303.7H732.23V1320.5ZM732.19 1320.5V1312.1H733.35V1320.5ZM733.31 1320.5V1303.7H734.47V1320.5ZM734.43 1320.5V1303.7H735.59V1320.5ZM735.55 1320.5V1303.7H736.71V1320.5ZM736.67 1320.5V1303.7H737.84V1320.5ZM737.80 1320.5V1303.7H738.96V1320.5ZM738.92 1320.5V1303.7H740.08V1320.5ZM740.04 1320.5V1303.7H741.20V1320.5ZM741.16 1320.5V1303.7H742.32V1320.5ZM742.28 1320.5V1303.7H743.44V1320.5ZM743.40 1320.5V1303.7H744.56V1320.5ZM744.52 1320.5V1303.7H745.68V1320.5ZM745.64 1320.5V1303.7H746.80V1320.5ZM746.76 1320.5V1303.7H747.92V1320.5ZM747.88 1320.5V1303.7H749.05V1320.5ZM749.01 1320.5V1303.7H750.17V1320.5ZM750.13 1320.5V1303.7H751.29V1320.5ZM751.25 1320.5V1303.7H752.41V1320.5ZM752.37 1320.5V1303.7H753.53V1320.5ZM753.49 1320.5V1303.7H754.65V1320.5ZM754.61 1320.5V1303.7H755.77V1320.5ZM755.73 1320.5V1303.7H756.89V1320.5ZM756.85 1320.5V1303.7H758.01V1320.5ZM757.97 1320.5V1303.7H759.14V1320.5ZM759.10 1320.5V1303.7H760.26V1320.5ZM760.22 1320.5V1303.7H761.38V1320.5ZM761.34 1320.5V1303.7H762.50V1320.5ZM762.46 1320.5V1303.7H763.62V1320.5ZM763.58 1320.5V1303.7H764.74V1320.5ZM764.70 1320.5V1303.7H765.86V1320.5ZM765.82 1320.5V1303.7H766.98V1320.5ZM766.94 1320.5V1303.7H768.10V1320.5ZM768.06 1320.5V1303.7H769.22V1320.5ZM769.18 1320.5V1303.7H770.35V1320.5ZM770.31 1320.5V1303.7H771.47V1320.5ZM771.43 1320.5V1303.7H772.59V1320.5ZM772.55 1320.5V1303.7H773.71V1320.5ZM773.67 1320.5V1303.7H774.83V1320.5ZM774.79 1320.5V1303.7H775.95V1320.5ZM775.91 1320.5V1303.7H777.07V1320.5ZM777.03 1320.5V1303.7H778.19V1320.5ZM778.15 1320.5V1295.2H779.31V1320.5ZM779.27 1320.5V1303.7H780.43V1320.5ZM780.39 1320.5V1303.7H781.56V1320.5ZM781.52 1320.5V1303.7H782.68V1320.5ZM782.64 1320.5V1303.7H783.80V1320.5ZM783.76 1320.5V1303.7H784.92V1320.5ZM784.88 1320.5V1303.7H786.04V1320.5ZM786.00 1320.5V1303.7H787.16V1320.5ZM787.12 1320.5V1303.7H788.28V1320.5ZM788.24 1320.5V1303.7H789.40V1320.5ZM789.36 1320.5V1303.7H790.52V1320.5ZM790.48 1320.5V1303.7H791.64V1320.5ZM791.61 1320.5V1303.7H792.77V1320.5ZM792.73 1320.5V1303.7H793.89V1320.5ZM793.85 1320.5V1303.7H795.01V1320.5ZM794.97 1320.5V1295.2H796.13V1320.5ZM796.09 1320.5V1303.7H797.25V1320.5ZM797.21 1320.5V1303.7H798.37V1320.5ZM798.33 1320.5V1303.7H799.49V1320.5ZM799.45 1320.5V1312.1H800.61V1320.5ZM800.57 1320.5V1303.7H801.73V1320.5ZM801.69 1320.5V1303.7H802.86V1320.5ZM802.82 1320.5V1303.7H803.98V1320.5ZM803.94 1320.5V1303.7H805.10V1320.5ZM805.06 1320.5V1303.7H806.22V1320.5ZM806.18 1320.5V1303.7H807.34V1320.5ZM807.30 1320.5V1303.7H808.46V1320.5ZM808.42 1320.5V1303.7H809.58V1320.5ZM809.54 1320.5V1303.7H810.70V1320.5ZM810.66 1320.5V1303.7H811.82V1320.5ZM811.78 1320.5V1303.7H812.94V1320.5ZM812.90 1320.5V1303.7H814.07V1320.5ZM814.03 1320.5V1303.7H815.19V1320.5ZM815.15 1320.5V1303.7H816.31V1320.5ZM816.27 1320.5V1312.1H817.43V1320.5ZM817.39 1320.5V1303.7H818.55V1320.5ZM818.51 1320.5V1303.7H819.67V1320.5ZM819.63 1320.5V1303.7H820.79V1320.5ZM820.75 1320.5V1312.1H821.91V1320.5ZM821.87 1320.5V1303.7H823.03V1320.5ZM822.99 1320.5V1303.7H824.15V1320.5ZM824.11 1320.5V1303.7H825.28V1320.5ZM825.24 1320.5V1303.7H826.40V1320.5ZM826.36 1320.5V1312.1H827.52V1320.5ZM827.48 1320.5V1303.7H828.64V1320.5ZM828.60 1320.5V1303.7H829.76V1320.5ZM829.72 1320.5V1303.7H830.88V1320.5ZM830.84 1320.5V1303.7H832.00V1320.5ZM831.96 1320.5V1303.7H833.12V1320.5ZM833.08 1320.5V1303.7H834.24V1320.5ZM834.20 1320.5V1303.7H835.37V1320.5ZM835.33 1320.5V1303.7H836.49V1320.5ZM836.45 1320.5V1303.7H837.61V1320.5ZM837.57 1320.5V1303.7H838.73V1320.5ZM838.69 1320.5V1303.7H839.85V1320.5ZM839.81 1320.5V1303.7H840.97V1320.5ZM840.93 1320.5V1303.7H842.09V1320.5ZM842.05 1320.5V1295.2H843.21V1320.5ZM843.17 1320.5V1303.7H844.33V1320.5ZM844.29 1320.5V1303.7H845.45V1320.5ZM845.41 1320.5V1303.7H846.58V1320.5ZM846.54 1320.5V1303.7H847.70V1320.5ZM847.66 1320.5V1303.7H848.82V1320.5ZM848.78 1320.5V1303.7H849.94V1320.5ZM849.90 1320.5V1303.7H851.06V1320.5ZM851.02 1320.5V1303.7H852.18V1320.5ZM852.14 1320.5V1303.7H853.30V1320.5ZM853.26 1320.5V1312.1H854.42V1320.5ZM854.38 1320.5V1303.7H855.54V1320.5ZM855.50 1320.5V1303.7H856.66V1320.5ZM856.62 1320.5V1303.7H857.79V1320.5ZM857.75 1320.5V1303.7H858.91V1320.5ZM858.87 1320.5V1303.7H860.03V1320.5ZM859.99 1320.5V1303.7H861.15V1320.5ZM861.11 1320.5V1303.7H862.27V1320.5ZM862.23 1320.5V1303.7H863.39V1320.5ZM863.35 1320.5V1303.7H864.51V1320.5ZM864.47 1320.5V1303.7H865.63V1320.5ZM865.59 1320.5V1303.7H866.75V1320.5ZM866.71 1320.5V1303.7H867.88V1320.5ZM867.84 1320.5V1312.1H869.00V1320.5ZM868.96 1320.5V1303.7H870.12V1320.5ZM870.08 1320.5V1303.7H871.24V1320.5ZM871.20 1320.5V1303.7H872.36V1320.5ZM872.32 1320.5V1303.7H873.48V1320.5ZM873.44 1320.5V1303.7H874.60V1320.5ZM874.56 1320.5V1312.1H875.72V1320.5ZM875.68 1320.5V1303.7H876.84V1320.5ZM876.80 1320.5V1303.7H877.96V1320.5ZM877.92 1320.5V1303.7H879.09V1320.5ZM879.05 1320.5V1303.7H880.21V1320.5ZM880.17 1320.5V1303.7H881.33V1320.5ZM881.29 1320.5V1312.1H882.45V1320.5ZM1030.38 1320.5V1312.1H1031.55V1320.5ZM1031.51 1320.5V1312.1H1032.67V1320.5ZM1032.63 1320.5V1303.7H1033.79V1320.5ZM1033.75 1320.5V1312.1H1034.91V1320.5ZM1034.87 1320.5V1303.7H1036.03V1320.5ZM1035.99 1320.5V1312.1H1037.15V1320.5ZM1037.11 1320.5V1312.1H1038.27V1320.5ZM1038.23 1320.5V1303.7H1039.39V1320.5ZM1039.35 1320.5V1312.1H1040.51V1320.5ZM1040.47 1320.5V1312.1H1041.64V1320.5ZM1041.60 1320.5V1312.1H1042.76V1320.5ZM1042.72 1320.5V1312.1H1043.88V1320.5ZM1043.84 1320.5V1303.7H1045.00V1320.5ZM1044.96 1320.5V1303.7H1046.12V1320.5ZM1046.08 1320.5V1312.1H1047.24V1320.5ZM1047.20 1320.5V1312.1H1048.36V1320.5ZM1048.32 1320.5V1312.1H1049.48V1320.5ZM1049.44 1320.5V1312.1H1050.60V1320.5ZM1050.56 1320.5V1303.7H1051.72V1320.5ZM1051.68 1320.5V1312.1H1052.85V1320.5ZM1052.81 1320.5V1312.1H1053.97V1320.5ZM1053.93 1320.5V1312.1H1055.09V1320.5ZM1055.05 1320.5V1303.7H1056.21V1320.5ZM1056.17 1320.5V1312.1H1057.33V1320.5ZM1057.29 1320.5V1312.1H1058.45V1320.5ZM1058.41 1320.5V1312.1H1059.57V1320.5ZM1059.53 1320.5V1312.1H1060.69V1320.5ZM1060.65 1320.5V1312.1H1061.81V1320.5ZM1061.77 1320.5V1303.7H1062.93V1320.5ZM1062.89 1320.5V1303.7H1064.06V1320.5ZM1064.02 1320.5V1312.1H1065.18V1320.5ZM1065.14 1320.5V1312.1H1066.30V1320.5ZM1066.26 1320.5V1312.1H1067.42V1320.5ZM1067.38 1320.5V1312.1H1068.54V1320.5ZM1068.50 1320.5V1312.1H1069.66V1320.5ZM1069.62 1320.5V1303.7H1070.78V1320.5ZM1070.74 1320.5V1312.1H1071.90V1320.5ZM1071.86 1320.5V1303.7H1073.02V1320.5ZM1072.98 1320.5V1303.7H1074.14V1320.5ZM1074.11 1320.5V1312.1H1075.27V1320.5ZM1075.23 1320.5V1312.1H1076.39V1320.5ZM1076.35 1320.5V1303.7H1077.51V1320.5ZM1077.47 1320.5V1303.7H1078.63V1320.5ZM1078.59 1320.5V1312.1H1079.75V1320.5ZM1079.71 1320.5V1303.7H1080.87V1320.5ZM1080.83 1320.5V1312.1H1081.99V1320.5ZM1081.95 1320.5V1303.7H1083.11V1320.5ZM1083.07 1320.5V1312.1H1084.23V1320.5ZM1084.19 1320.5V1303.7H1085.36V1320.5ZM1085.32 1320.5V1312.1H1086.48V1320.5ZM1086.44 1320.5V1312.1H1087.60V1320.5ZM1087.56 1320.5V1312.1H1088.72V1320.5ZM1088.68 1320.5V1312.1H1089.84V1320.5ZM1089.80 1320.5V1303.7H1090.96V1320.5ZM1090.92 1320.5V1303.7H1092.08V1320.5ZM1092.04 1320.5V1312.1H1093.20V1320.5ZM1093.16 1320.5V1312.1H1094.32V1320.5ZM1094.28 1320.5V1312.1H1095.44V1320.5ZM1095.40 1320.5V1303.7H1096.57V1320.5ZM1096.53 1320.5V1312.1H1097.69V1320.5ZM1097.65 1320.5V1312.1H1098.81V1320.5ZM1098.77 1320.5V1303.7H1099.93V1320.5ZM1099.89 1320.5V1303.7H1101.05V1320.5ZM1101.01 1320.5V1312.1H1102.17V1320.5ZM1102.13 1320.5V1312.1H1103.29V1320.5ZM1103.25 1320.5V1312.1H1104.41V1320.5ZM1104.37 1320.5V1312.1H1105.53V1320.5ZM1105.49 1320.5V1303.7H1106.65V1320.5ZM1106.61 1320.5V1312.1H1107.78V1320.5ZM1107.74 1320.5V1303.7H1108.90V1320.5ZM1108.86 1320.5V1312.1H1110.02V1320.5ZM1109.98 1320.5V1312.1H1111.14V1320.5ZM1111.10 1320.5V1312.1H1112.26V1320.5ZM1112.22 1320.5V1312.1H1113.38V1320.5ZM1113.34 1320.5V1312.1H1114.50V1320.5ZM1114.46 1320.5V1312.1H1115.62V1320.5ZM1115.58 1320.5V1312.1H1116.74V1320.5ZM1116.70 1320.5V1312.1H1117.87V1320.5ZM1117.83 1320.5V1312.1H1118.99V1320.5ZM1118.95 1320.5V1303.7H1120.11V1320.5ZM1120.07 1320.5V1312.1H1121.23V1320.5ZM1121.19 1320.5V1312.1H1122.35V1320.5ZM1122.31 1320.5V1312.1H1123.47V1320.5ZM1123.43 1320.5V1312.1H1124.59V1320.5ZM1124.55 1320.5V1312.1H1125.71V1320.5ZM1125.67 1320.5V1312.1H1126.83V1320.5ZM1126.79 1320.5V1295.2H1127.95V1320.5ZM1127.91 1320.5V1303.7H1129.08V1320.5ZM1129.04 1320.5V1303.7H1130.20V1320.5ZM1130.16 1320.5V1312.1H1131.32V1320.5ZM1131.28 1320.5V1312.1H1132.44V1320.5ZM1132.40 1320.5V1312.1H1133.56V1320.5ZM1133.52 1320.5V1312.1H1134.68V1320.5ZM1134.64 1320.5V1312.1H1135.80V1320.5ZM1135.76 1320.5V1312.1H1136.92V1320.5ZM1136.88 1320.5V1312.1H1138.04V1320.5ZM1138.00 1320.5V1312.1H1139.16V1320.5ZM1139.12 1320.5V1312.1H1140.29V1320.5ZM1140.25 1320.5V1303.7H1141.41V1320.5ZM1141.37 1320.5V1312.1H1142.53V1320.5ZM1142.49 1320.5V1303.7H1143.65V1320.5ZM1143.61 1320.5V1312.1H1144.77V1320.5ZM1144.73 1320.5V1312.1H1145.89V1320.5ZM1145.85 1320.5V1312.1H1147.01V1320.5ZM1146.97 1320.5V1312.1H1148.13V1320.5ZM1148.09 1320.5V1312.1H1149.25V1320.5ZM1149.21 1320.5V1312.1H1150.38V1320.5ZM1150.34 1320.5V1312.1H1151.50V1320.5ZM1151.46 1320.5V1303.7H1152.62V1320.5ZM1152.58 1320.5V1312.1H1153.74V1320.5ZM1153.70 1320.5V1312.1H1154.86V1320.5ZM1154.82 1320.5V1312.1H1155.98V1320.5ZM1155.94 1320.5V1312.1H1157.10V1320.5ZM1157.06 1320.5V1312.1H1158.22V1320.5ZM1158.18 1320.5V1303.7H1159.34V1320.5ZM1159.30 1320.5V1303.7H1160.46V1320.5ZM1160.42 1320.5V1303.7H1161.59V1320.5ZM1161.55 1320.5V1303.7H1162.71V1320.5ZM1162.67 1320.5V1312.1H1163.83V1320.5ZM1163.79 1320.5V1312.1H1164.95V1320.5ZM1164.91 1320.5V1295.2H1166.07V1320.5ZM1166.03 1320.5V1312.1H1167.19V1320.5ZM1167.15 1320.5V1312.1H1168.31V1320.5ZM1168.27 1320.5V1312.1H1169.43V1320.5ZM1169.39 1320.5V1312.1H1170.55V1320.5ZM1170.51 1320.5V1303.7H1171.67V1320.5ZM1171.63 1320.5V1312.1H1172.80V1320.5ZM1172.76 1320.5V1312.1H1173.92V1320.5ZM1173.88 1320.5V1303.7H1175.04V1320.5ZM1175.00 1320.5V1303.7H1176.16V1320.5ZM1176.12 1320.5V1312.1H1177.28V1320.5ZM1177.24 1320.5V1312.1H1178.40V1320.5ZM1178.36 1320.5V1312.1H1179.52V1320.5ZM1179.48 1320.5V1312.1H1180.64V1320.5ZM1180.60 1320.5V1312.1H1181.76V1320.5ZM1181.72 1320.5V1312.1H1182.89V1320.5ZM1182.85 1320.5V1303.7H1184.01V1320.5ZM1183.97 1320.5V1312.1H1185.13V1320.5ZM1185.09 1320.5V1312.1H1186.25V1320.5ZM1186.21 1320.5V1312.1H1187.37V1320.5ZM1187.33 1320.5V1303.7H1188.49V1320.5ZM1188.45 1320.5V1312.1H1189.61V1320.5ZM1189.57 1320.5V1312.1H1190.73V1320.5ZM1190.69 1320.5V1303.7H1191.85V1320.5ZM1191.81 1320.5V1303.7H1192.97V1320.5ZM1192.93 1320.5V1312.1H1194.10V1320.5ZM1194.06 1320.5V1312.1H1195.22V1320.5ZM1195.18 1320.5V1303.7H1196.34V1320.5ZM1196.30 1320.5V1303.7H1197.46V1320.5ZM1197.42 1320.5V1312.1H1198.58V1320.5ZM1198.54 1320.5V1312.1H1199.70V1320.5ZM1199.66 1320.5V1312.1H1200.82V1320.5ZM1200.78 1320.5V1303.7H1201.94V1320.5ZM1201.90 1320.5V1303.7H1203.06V1320.5ZM1203.02 1320.5V1312.1H1204.18V1320.5ZM1204.14 1320.5V1312.1H1205.31V1320.5ZM1353.24 1320.5V1160.4H1354.40V1320.5ZM1354.36 1320.5V1211.0H1355.52V1320.5ZM1355.48 1320.5V1303.7H1356.64V1320.5ZM1356.61 1320.5V1286.8H1357.77V1320.5ZM1357.73 1320.5V1286.8H1358.89V1320.5ZM1358.85 1320.5V1312.1H1360.01V1320.5ZM1359.97 1320.5V1286.8H1361.13V1320.5ZM1361.09 1320.5V1303.7H1362.25V1320.5ZM1362.21 1320.5V1286.8H1363.37V1320.5ZM1363.33 1320.5V1286.8H1364.49V1320.5ZM1364.45 1320.5V1286.8H1365.61V1320.5ZM1365.57 1320.5V1286.8H1366.73V1320.5ZM1366.69 1320.5V1312.1H1367.86V1320.5ZM1367.82 1320.5V1295.2H1368.98V1320.5ZM1368.94 1320.5V1312.1H1370.10V1320.5ZM1370.06 1320.5V1312.1H1371.22V1320.5ZM1371.18 1320.5V1303.7H1372.34V1320.5ZM1372.30 1320.5V1303.7H1373.46V1320.5ZM1373.42 1320.5V1295.2H1374.58V1320.5ZM1374.54 1320.5V1303.7H1375.70V1320.5ZM1375.66 1320.5V1312.1H1376.82V1320.5ZM1376.78 1320.5V1303.7H1377.94V1320.5ZM1377.90 1320.5V1312.1H1379.07V1320.5ZM1379.03 1320.5V1312.1H1380.19V1320.5ZM1380.15 1320.5V1312.1H1381.31V1320.5ZM1381.27 1320.5V1303.7H1382.43V1320.5ZM1382.39 1320.5V1312.1H1383.55V1320.5ZM1383.51 1320.5V1312.1H1384.67V1320.5ZM1384.63 1320.5V1312.1H1385.79V1320.5ZM1385.75 1320.5V1303.7H1386.91V1320.5ZM1386.87 1320.5V1312.1H1388.03V1320.5ZM1387.99 1320.5V1312.1H1389.15V1320.5ZM1389.11 1320.5V1312.1H1390.28V1320.5ZM1390.24 1320.5V1312.1H1391.40V1320.5ZM1391.36 1320.5V1312.1H1392.52V1320.5ZM1392.48 1320.5V1312.1H1393.64V1320.5ZM1393.60 1320.5V1312.1H1394.76V1320.5ZM1394.72 1320.5V1303.7H1395.88V1320.5ZM1395.84 1320.5V1312.1H1397.00V1320.5ZM1396.96 1320.5V1303.7H1398.12V1320.5ZM1398.08 1320.5V1312.1H1399.24V1320.5ZM1399.20 1320.5V1312.1H1400.37V1320.5ZM1400.33 1320.5V1303.7H1401.49V1320.5ZM1401.45 1320.5V1312.1H1402.61V1320.5ZM1402.57 1320.5V1312.1H1403.73V1320.5ZM1403.69 1320.5V1312.1H1404.85V1320.5ZM1404.81 1320.5V1312.1H1405.97V1320.5ZM1405.93 1320.5V1312.1H1407.09V1320.5ZM1407.05 1320.5V1312.1H1408.21V1320.5ZM1408.17 1320.5V1312.1H1409.33V1320.5ZM1409.29 1320.5V1303.7H1410.45V1320.5ZM1410.41 1320.5V1312.1H1411.58V1320.5ZM1411.54 1320.5V1312.1H1412.70V1320.5ZM1412.66 1320.5V1312.1H1413.82V1320.5ZM1413.78 1320.5V1312.1H1414.94V1320.5ZM1414.90 1320.5V1312.1H1416.06V1320.5ZM1416.02 1320.5V1303.7H1417.18V1320.5ZM1417.14 1320.5V1303.7H1418.30V1320.5ZM1418.26 1320.5V1312.1H1419.42V1320.5ZM1419.38 1320.5V1303.7H1420.54V1320.5ZM1420.50 1320.5V1312.1H1421.66V1320.5ZM1421.62 1320.5V1303.7H1422.79V1320.5ZM1422.75 1320.5V1312.1H1423.91V1320.5ZM1423.87 1320.5V1312.1H1425.03V1320.5ZM1424.99 1320.5V1303.7H1426.15V1320.5ZM1426.11 1320.5V1312.1H1427.27V1320.5ZM1427.23 1320.5V1312.1H1428.39V1320.5ZM1428.35 1320.5V1312.1H1429.51V1320.5ZM1429.47 1320.5V1303.7H1430.63V1320.5ZM1430.59 1320.5V1303.7H1431.75V1320.5ZM1431.71 1320.5V1312.1H1432.88V1320.5ZM1432.84 1320.5V1303.7H1434.00V1320.5ZM1433.96 1320.5V1312.1H1435.12V1320.5ZM1435.08 1320.5V1312.1H1436.24V1320.5ZM1436.20 1320.5V1303.7H1437.36V1320.5ZM1437.32 1320.5V1312.1H1438.48V1320.5ZM1438.44 1320.5V1312.1H1439.60V1320.5ZM1439.56 1320.5V1303.7H1440.72V1320.5ZM1440.68 1320.5V1303.7H1441.84V1320.5ZM1441.80 1320.5V1312.1H1442.96V1320.5ZM1442.92 1320.5V1303.7H1444.09V1320.5ZM1444.05 1320.5V1312.1H1445.21V1320.5ZM1445.17 1320.5V1312.1H1446.33V1320.5ZM1446.29 1320.5V1312.1H1447.45V1320.5ZM1447.41 1320.5V1312.1H1448.57V1320.5ZM1448.53 1320.5V1312.1H1449.69V1320.5ZM1449.65 1320.5V1312.1H1450.81V1320.5ZM1450.77 1320.5V1312.1H1451.93V1320.5ZM1451.89 1320.5V1303.7H1453.05V1320.5ZM1453.01 1320.5V1312.1H1454.17V1320.5ZM1454.13 1320.5V1312.1H1455.30V1320.5ZM1455.26 1320.5V1312.1H1456.42V1320.5ZM1456.38 1320.5V1312.1H1457.54V1320.5ZM1457.50 1320.5V1303.7H1458.66V1320.5ZM1458.62 1320.5V1312.1H1459.78V1320.5ZM1459.74 1320.5V1312.1H1460.90V1320.5ZM1460.86 1320.5V1312.1H1462.02V1320.5ZM1461.98 1320.5V1312.1H1463.14V1320.5ZM1463.10 1320.5V1303.7H1464.26V1320.5ZM1464.22 1320.5V1303.7H1465.39V1320.5ZM1465.35 1320.5V1303.7H1466.51V1320.5ZM1466.47 1320.5V1312.1H1467.63V1320.5ZM1467.59 1320.5V1303.7H1468.75V1320.5ZM1468.71 1320.5V1312.1H1469.87V1320.5ZM1469.83 1320.5V1312.1H1470.99V1320.5ZM1470.95 1320.5V1303.7H1472.11V1320.5ZM1472.07 1320.5V1303.7H1473.23V1320.5ZM1473.19 1320.5V1312.1H1474.35V1320.5ZM1474.31 1320.5V1312.1H1475.47V1320.5ZM1475.43 1320.5V1312.1H1476.60V1320.5ZM1476.56 1320.5V1303.7H1477.72V1320.5ZM1477.68 1320.5V1312.1H1478.84V1320.5ZM1478.80 1320.5V1312.1H1479.96V1320.5ZM1479.92 1320.5V1312.1H1481.08V1320.5ZM1481.04 1320.5V1312.1H1482.20V1320.5ZM1482.16 1320.5V1303.7H1483.32V1320.5ZM1483.28 1320.5V1303.7H1484.44V1320.5ZM1484.40 1320.5V1303.7H1485.56V1320.5ZM1485.52 1320.5V1312.1H1486.68V1320.5ZM1486.64 1320.5V1312.1H1487.81V1320.5ZM1487.77 1320.5V1312.1H1488.93V1320.5ZM1488.89 1320.5V1312.1H1490.05V1320.5ZM1490.01 1320.5V1312.1H1491.17V1320.5ZM1491.13 1320.5V1312.1H1492.29V1320.5ZM1492.25 1320.5V1303.7H1493.41V1320.5ZM1493.37 1320.5V1312.1H1494.53V1320.5ZM1494.49 1320.5V1303.7H1495.65V1320.5ZM1495.61 1320.5V1312.1H1496.77V1320.5ZM1496.73 1320.5V1312.1H1497.89V1320.5ZM1497.86 1320.5V1312.1H1499.02V1320.5ZM1498.98 1320.5V1312.1H1500.14V1320.5ZM1500.10 1320.5V1303.7H1501.26V1320.5ZM1501.22 1320.5V1312.1H1502.38V1320.5ZM1502.34 1320.5V1312.1H1503.50V1320.5ZM1503.46 1320.5V1312.1H1504.62V1320.5ZM1504.58 1320.5V1312.1H1505.74V1320.5ZM1505.70 1320.5V1312.1H1506.86V1320.5ZM1506.82 1320.5V1303.7H1507.98V1320.5ZM1507.94 1320.5V1312.1H1509.11V1320.5ZM1509.07 1320.5V1303.7H1510.23V1320.5ZM1510.19 1320.5V1312.1H1511.35V1320.5ZM1511.31 1320.5V1312.1H1512.47V1320.5ZM1512.43 1320.5V1312.1H1513.59V1320.5ZM1513.55 1320.5V1312.1H1514.71V1320.5ZM1514.67 1320.5V1312.1H1515.83V1320.5ZM1515.79 1320.5V1312.1H1516.95V1320.5ZM1516.91 1320.5V1312.1H1518.07V1320.5ZM1518.03 1320.5V1303.7H1519.19V1320.5ZM1519.15 1320.5V1303.7H1520.32V1320.5ZM1520.28 1320.5V1303.7H1521.44V1320.5ZM1521.40 1320.5V1312.1H1522.56V1320.5ZM1522.52 1320.5V1312.1H1523.68V1320.5ZM1523.64 1320.5V1303.7H1524.80V1320.5ZM1524.76 1320.5V1312.1H1525.92V1320.5ZM1525.88 1320.5V1312.1H1527.04V1320.5ZM1527.00 1320.5V1303.7H1528.16V1320.5ZM1676.10 1320.5V1278.4H1677.26V1320.5ZM1677.22 1320.5V1312.1H1678.38V1320.5ZM1678.34 1320.5V1303.7H1679.50V1320.5ZM1679.46 1320.5V1303.7H1680.62V1320.5ZM1680.58 1320.5V1312.1H1681.74V1320.5ZM1681.70 1320.5V1295.2H1682.87V1320.5ZM1682.83 1320.5V1295.2H1683.99V1320.5ZM1683.95 1320.5V1303.7H1685.11V1320.5ZM1685.07 1320.5V1303.7H1686.23V1320.5ZM1686.19 1320.5V1303.7H1687.35V1320.5ZM1687.31 1320.5V1312.1H1688.47V1320.5ZM1688.43 1320.5V1312.1H1689.59V1320.5ZM1689.55 1320.5V1303.7H1690.71V1320.5ZM1690.67 1320.5V1312.1H1691.83V1320.5ZM1691.79 1320.5V1303.7H1692.95V1320.5ZM1692.91 1320.5V1312.1H1694.08V1320.5ZM1694.04 1320.5V1303.7H1695.20V1320.5ZM1695.16 1320.5V1312.1H1696.32V1320.5ZM1696.28 1320.5V1312.1H1697.44V1320.5ZM1697.40 1320.5V1312.1H1698.56V1320.5ZM1698.52 1320.5V1312.1H1699.68V1320.5ZM1699.64 1320.5V1303.7H1700.80V1320.5ZM1700.76 1320.5V1312.1H1701.92V1320.5ZM1701.88 1320.5V1312.1H1703.04V1320.5ZM1703.00 1320.5V1303.7H1704.16V1320.5ZM1704.12 1320.5V1312.1H1705.29V1320.5ZM1705.25 1320.5V1312.1H1706.41V1320.5ZM1706.37 1320.5V1312.1H1707.53V1320.5ZM1707.49 1320.5V1312.1H1708.65V1320.5ZM1708.61 1320.5V1303.7H1709.77V1320.5ZM1709.73 1320.5V1312.1H1710.89V1320.5ZM1710.85 1320.5V1312.1H1712.01V1320.5ZM1711.97 1320.5V1312.1H1713.13V1320.5ZM1713.09 1320.5V1312.1H1714.25V1320.5ZM1714.21 1320.5V1312.1H1715.38V1320.5ZM1715.34 1320.5V1312.1H1716.50V1320.5ZM1716.46 1320.5V1303.7H1717.62V1320.5ZM1717.58 1320.5V1312.1H1718.74V1320.5ZM1718.70 1320.5V1303.7H1719.86V1320.5ZM1719.82 1320.5V1312.1H1720.98V1320.5ZM1720.94 1320.5V1312.1H1722.10V1320.5ZM1722.06 1320.5V1312.1H1723.22V1320.5ZM1723.18 1320.5V1312.1H1724.34V1320.5ZM1724.30 1320.5V1312.1H1725.46V1320.5ZM1725.42 1320.5V1303.7H1726.59V1320.5ZM1726.55 1320.5V1312.1H1727.71V1320.5ZM1727.67 1320.5V1312.1H1728.83V1320.5ZM1728.79 1320.5V1303.7H1729.95V1320.5ZM1729.91 1320.5V1312.1H1731.07V1320.5ZM1731.03 1320.5V1303.7H1732.19V1320.5ZM1732.15 1320.5V1312.1H1733.31V1320.5ZM1733.27 1320.5V1312.1H1734.43V1320.5ZM1734.39 1320.5V1303.7H1735.55V1320.5ZM1735.51 1320.5V1303.7H1736.67V1320.5ZM1736.63 1320.5V1312.1H1737.80V1320.5ZM1737.76 1320.5V1312.1H1738.92V1320.5ZM1738.88 1320.5V1303.7H1740.04V1320.5ZM1740.00 1320.5V1303.7H1741.16V1320.5ZM1741.12 1320.5V1312.1H1742.28V1320.5ZM1742.24 1320.5V1303.7H1743.40V1320.5ZM1743.36 1320.5V1312.1H1744.52V1320.5ZM1744.48 1320.5V1312.1H1745.64V1320.5ZM1745.60 1320.5V1303.7H1746.76V1320.5ZM1746.72 1320.5V1312.1H1747.89V1320.5ZM1747.85 1320.5V1303.7H1749.01V1320.5ZM1748.97 1320.5V1303.7H1750.13V1320.5ZM1750.09 1320.5V1312.1H1751.25V1320.5ZM1751.21 1320.5V1312.1H1752.37V1320.5ZM1752.33 1320.5V1312.1H1753.49V1320.5ZM1753.45 1320.5V1312.1H1754.61V1320.5ZM1754.57 1320.5V1303.7H1755.73V1320.5ZM1755.69 1320.5V1303.7H1756.85V1320.5ZM1756.81 1320.5V1312.1H1757.97V1320.5ZM1757.93 1320.5V1303.7H1759.10V1320.5ZM1759.06 1320.5V1303.7H1760.22V1320.5ZM1760.18 1320.5V1312.1H1761.34V1320.5ZM1761.30 1320.5V1312.1H1762.46V1320.5ZM1762.42 1320.5V1303.7H1763.58V1320.5ZM1763.54 1320.5V1303.7H1764.70V1320.5ZM1764.66 1320.5V1312.1H1765.82V1320.5ZM1765.78 1320.5V1312.1H1766.94V1320.5ZM1766.90 1320.5V1312.1H1768.06V1320.5ZM1768.02 1320.5V1303.7H1769.18V1320.5ZM1769.14 1320.5V1312.1H1770.31V1320.5ZM1770.27 1320.5V1312.1H1771.43V1320.5ZM1771.39 1320.5V1312.1H1772.55V1320.5ZM1772.51 1320.5V1312.1H1773.67V1320.5ZM1773.63 1320.5V1303.7H1774.79V1320.5ZM1774.75 1320.5V1312.1H1775.91V1320.5ZM1775.87 1320.5V1303.7H1777.03V1320.5ZM1776.99 1320.5V1312.1H1778.15V1320.5ZM1778.11 1320.5V1303.7H1779.27V1320.5ZM1779.23 1320.5V1303.7H1780.39V1320.5ZM1780.36 1320.5V1303.7H1781.52V1320.5ZM1781.48 1320.5V1312.1H1782.64V1320.5ZM1782.60 1320.5V1303.7H1783.76V1320.5ZM1783.72 1320.5V1312.1H1784.88V1320.5ZM1784.84 1320.5V1312.1H1786.00V1320.5ZM1785.96 1320.5V1312.1H1787.12V1320.5ZM1787.08 1320.5V1303.7H1788.24V1320.5ZM1788.20 1320.5V1312.1H1789.36V1320.5ZM1789.32 1320.5V1312.1H1790.48V1320.5ZM1790.44 1320.5V1312.1H1791.61V1320.5ZM1791.57 1320.5V1312.1H1792.73V1320.5ZM1792.69 1320.5V1303.7H1793.85V1320.5ZM1793.81 1320.5V1312.1H1794.97V1320.5ZM1794.93 1320.5V1312.1H1796.09V1320.5ZM1796.05 1320.5V1303.7H1797.21V1320.5ZM1797.17 1320.5V1303.7H1798.33V1320.5ZM1798.29 1320.5V1303.7H1799.45V1320.5ZM1799.41 1320.5V1312.1H1800.57V1320.5ZM1800.53 1320.5V1303.7H1801.69V1320.5ZM1801.65 1320.5V1303.7H1802.82V1320.5ZM1802.78 1320.5V1303.7H1803.94V1320.5ZM1803.90 1320.5V1312.1H1805.06V1320.5ZM1805.02 1320.5V1312.1H1806.18V1320.5ZM1806.14 1320.5V1312.1H1807.30V1320.5ZM1807.26 1320.5V1312.1H1808.42V1320.5ZM1808.38 1320.5V1303.7H1809.54V1320.5ZM1809.50 1320.5V1312.1H1810.66V1320.5ZM1810.62 1320.5V1312.1H1811.78V1320.5ZM1811.74 1320.5V1312.1H1812.90V1320.5ZM1812.86 1320.5V1312.1H1814.03V1320.5ZM1813.99 1320.5V1312.1H1815.15V1320.5ZM1815.11 1320.5V1312.1H1816.27V1320.5ZM1816.23 1320.5V1312.1H1817.39V1320.5ZM1817.35 1320.5V1303.7H1818.51V1320.5ZM1818.47 1320.5V1312.1H1819.63V1320.5ZM1819.59 1320.5V1303.7H1820.75V1320.5ZM1820.71 1320.5V1303.7H1821.87V1320.5ZM1821.83 1320.5V1312.1H1822.99V1320.5ZM1822.95 1320.5V1312.1H1824.12V1320.5ZM1824.08 1320.5V1303.7H1825.24V1320.5ZM1825.20 1320.5V1312.1H1826.36V1320.5ZM1826.32 1320.5V1303.7H1827.48V1320.5ZM1827.44 1320.5V1312.1H1828.60V1320.5ZM1828.56 1320.5V1303.7H1829.72V1320.5ZM1829.68 1320.5V1303.7H1830.84V1320.5ZM1830.80 1320.5V1312.1H1831.96V1320.5ZM1831.92 1320.5V1303.7H1833.08V1320.5ZM1833.04 1320.5V1303.7H1834.20V1320.5ZM1834.16 1320.5V1303.7H1835.33V1320.5ZM1835.29 1320.5V1312.1H1836.45V1320.5ZM1836.41 1320.5V1312.1H1837.57V1320.5ZM1837.53 1320.5V1312.1H1838.69V1320.5ZM1838.65 1320.5V1303.7H1839.81V1320.5ZM1839.77 1320.5V1312.1H1840.93V1320.5ZM1840.89 1320.5V1312.1H1842.05V1320.5ZM1842.01 1320.5V1312.1H1843.17V1320.5ZM1843.13 1320.5V1312.1H1844.29V1320.5ZM1844.25 1320.5V1312.1H1845.41V1320.5ZM1845.37 1320.5V1303.7H1846.54V1320.5ZM1846.50 1320.5V1312.1H1847.66V1320.5ZM1847.62 1320.5V1312.1H1848.78V1320.5ZM1848.74 1320.5V1312.1H1849.90V1320.5ZM1849.86 1320.5V1312.1H1851.02V1320.5ZM1850.98 1320.5V1303.7H1852.14V1320.5ZM1852.10 1320.5V1303.7H1853.26V1320.5ZM1853.22 1320.5V1312.1H1854.38V1320.5ZM1854.34 1320.5V1312.1H1855.50V1320.5ZM1855.46 1320.5V1312.1H1856.63V1320.5ZM1856.59 1320.5V1312.1H1857.75V1320.5ZM1857.71 1320.5V1303.7H1858.87V1320.5ZM1858.83 1320.5V1312.1H1859.99V1320.5ZM1859.95 1320.5V1303.7H1861.11V1320.5ZM1861.07 1320.5V1312.1H1862.23V1320.5ZM1862.19 1320.5V1303.7H1863.35V1320.5ZM1863.31 1320.5V1312.1H1864.47V1320.5ZM1864.43 1320.5V1303.7H1865.59V1320.5ZM1865.55 1320.5V1303.7H1866.71V1320.5ZM1866.67 1320.5V1312.1H1867.84V1320.5ZM1867.80 1320.5V1312.1H1868.96V1320.5ZM1868.92 1320.5V1303.7H1870.08V1320.5ZM1870.04 1320.5V1312.1H1871.20V1320.5ZM1871.16 1320.5V1303.7H1872.32V1320.5ZM1872.28 1320.5V1303.7H1873.44V1320.5ZM1873.40 1320.5V1312.1H1874.56V1320.5ZM1874.52 1320.5V1312.1H1875.68V1320.5ZM1875.64 1320.5V1312.1H1876.80V1320.5ZM1876.76 1320.5V1312.1H1877.92V1320.5ZM1877.88 1320.5V1303.7H1879.05V1320.5ZM1879.01 1320.5V1312.1H1880.17V1320.5ZM1880.13 1320.5V1303.7H1881.29V1320.5ZM1881.25 1320.5V1312.1H1882.41V1320.5ZM1882.37 1320.5V1303.7H1883.53V1320.5ZM1883.49 1320.5V1312.1H1884.65V1320.5ZM1884.61 1320.5V1312.1H1885.77V1320.5ZM1885.73 1320.5V1312.1H1886.89V1320.5ZM1886.85 1320.5V1303.7H1888.01V1320.5ZM1887.97 1320.5V1312.1H1889.14V1320.5ZM1889.10 1320.5V1303.7H1890.26V1320.5ZM1890.22 1320.5V1312.1H1891.38V1320.5ZM1891.34 1320.5V1303.7H1892.50V1320.5ZM1892.46 1320.5V1303.7H1893.62V1320.5ZM1893.58 1320.5V1312.1H1894.74V1320.5ZM1894.70 1320.5V1312.1H1895.86V1320.5ZM1895.82 1320.5V1312.1H1896.98V1320.5ZM1896.94 1320.5V1312.1H1898.10V1320.5ZM1898.06 1320.5V1312.1H1899.22V1320.5ZM1899.18 1320.5V1303.7H1900.35V1320.5ZM1900.31 1320.5V1312.1H1901.47V1320.5ZM1901.43 1320.5V1312.1H1902.59V1320.5ZM1902.55 1320.5V1303.7H1903.71V1320.5ZM1903.67 1320.5V1312.1H1904.83V1320.5ZM1904.79 1320.5V1312.1H1905.95V1320.5ZM1905.91 1320.5V1303.7H1907.07V1320.5ZM1907.03 1320.5V1312.1H1908.19V1320.5ZM1908.15 1320.5V1312.1H1909.31V1320.5ZM1909.27 1320.5V1312.1H1910.43V1320.5ZM1910.39 1320.5V1303.7H1911.56V1320.5ZM1911.52 1320.5V1312.1H1912.68V1320.5ZM1912.64 1320.5V1312.1H1913.80V1320.5ZM1913.76 1320.5V1303.7H1914.92V1320.5ZM1914.88 1320.5V1303.7H1916.04V1320.5ZM1916.00 1320.5V1303.7H1917.16V1320.5ZM1917.12 1320.5V1312.1H1918.28V1320.5ZM1918.24 1320.5V1303.7H1919.40V1320.5ZM1919.36 1320.5V1303.7H1920.52V1320.5ZM1920.48 1320.5V1303.7H1921.64V1320.5ZM1921.61 1320.5V1312.1H1922.77V1320.5ZM1922.73 1320.5V1303.7H1923.89V1320.5ZM1923.85 1320.5V1312.1H1925.01V1320.5ZM1924.97 1320.5V1303.7H1926.13V1320.5ZM1926.09 1320.5V1303.7H1927.25V1320.5ZM1927.21 1320.5V1312.1H1928.37V1320.5ZM1928.33 1320.5V1312.1H1929.49V1320.5ZM1929.45 1320.5V1303.7H1930.61V1320.5ZM1930.57 1320.5V1303.7H1931.73V1320.5ZM1931.69 1320.5V1312.1H1932.86V1320.5ZM1932.82 1320.5V1312.1H1933.98V1320.5ZM1933.94 1320.5V1303.7H1935.10V1320.5ZM1935.06 1320.5V1312.1H1936.22V1320.5ZM1936.18 1320.5V1303.7H1937.34V1320.5ZM1937.30 1320.5V1303.7H1938.46V1320.5ZM1938.42 1320.5V1312.1H1939.58V1320.5ZM1939.54 1320.5V1303.7H1940.70V1320.5ZM1940.66 1320.5V1312.1H1941.82V1320.5ZM1941.78 1320.5V1303.7H1942.94V1320.5ZM1942.90 1320.5V1312.1H1944.07V1320.5ZM1944.03 1320.5V1303.7H1945.19V1320.5ZM1945.15 1320.5V1312.1H1946.31V1320.5ZM1946.27 1320.5V1312.1H1947.43V1320.5ZM1947.39 1320.5V1303.7H1948.55V1320.5ZM1948.51 1320.5V1303.7H1949.67V1320.5ZM1949.63 1320.5V1303.7H1950.79V1320.5ZM1950.75 1320.5V1312.1H1951.91V1320.5ZM1951.87 1320.5V1303.7H1953.03V1320.5ZM1952.99 1320.5V1303.7H1954.15V1320.5ZM1954.11 1320.5V1303.7H1955.28V1320.5ZM1955.24 1320.5V1303.7H1956.40V1320.5ZM1956.36 1320.5V1303.7H1957.52V1320.5ZM1957.48 1320.5V1312.1H1958.64V1320.5ZM1958.60 1320.5V1303.7H1959.76V1320.5ZM1959.72 1320.5V1312.1H1960.88V1320.5ZM1960.84 1320.5V1303.7H1962.00V1320.5ZM1961.96 1320.5V1303.7H1963.12V1320.5ZM1963.08 1320.5V1303.7H1964.24V1320.5ZM1964.20 1320.5V1312.1H1965.37V1320.5ZM1965.33 1320.5V1303.7H1966.49V1320.5ZM1966.45 1320.5V1312.1H1967.61V1320.5ZM1967.57 1320.5V1303.7H1968.73V1320.5ZM1968.69 1320.5V1312.1H1969.85V1320.5ZM1969.81 1320.5V1303.7H1970.97V1320.5ZM1970.93 1320.5V1312.1H1972.09V1320.5ZM1972.05 1320.5V1303.7H1973.21V1320.5ZM1973.17 1320.5V1312.1H1974.33V1320.5ZM1974.29 1320.5V1312.1H1975.45V1320.5ZM1975.41 1320.5V1303.7H1976.58V1320.5ZM1976.54 1320.5V1303.7H1977.70V1320.5ZM1977.66 1320.5V1312.1H1978.82V1320.5ZM1978.78 1320.5V1303.7H1979.94V1320.5ZM1979.90 1320.5V1303.7H1981.06V1320.5ZM1981.02 1320.5V1303.7H1982.18V1320.5ZM1982.14 1320.5V1312.1H1983.30V1320.5ZM1983.26 1320.5V1312.1H1984.42V1320.5ZM1984.38 1320.5V1303.7H1985.54V1320.5ZM1985.50 1320.5V1312.1H1986.66V1320.5ZM1986.62 1320.5V1303.7H1987.79V1320.5ZM1987.75 1320.5V1303.7H1988.91V1320.5ZM1988.87 1320.5V1303.7H1990.03V1320.5ZM1989.99 1320.5V1303.7H1991.15V1320.5ZM1991.11 1320.5V1303.7H1992.27V1320.5ZM1992.23 1320.5V1303.7H1993.39V1320.5ZM1993.35 1320.5V1312.1H1994.51V1320.5ZM1994.47 1320.5V1303.7H1995.63V1320.5ZM1995.59 1320.5V1303.7H1996.75V1320.5ZM1996.71 1320.5V1312.1H1997.88V1320.5ZM1997.84 1320.5V1303.7H1999.00V1320.5ZM1998.96 1320.5V1303.7H2000.12V1320.5ZM2000.08 1320.5V1312.1H2001.24V1320.5ZM2001.20 1320.5V1312.1H2002.36V1320.5ZM2002.32 1320.5V1303.7H2003.48V1320.5ZM2003.44 1320.5V1303.7H2004.60V1320.5ZM2004.56 1320.5V1312.1H2005.72V1320.5ZM2005.68 1320.5V1303.7H2006.84V1320.5ZM2006.80 1320.5V1303.7H2007.96V1320.5ZM2007.92 1320.5V1303.7H2009.09V1320.5ZM2009.05 1320.5V1303.7H2010.21V1320.5ZM2010.17 1320.5V1312.1H2011.33V1320.5ZM2011.29 1320.5V1303.7H2012.45V1320.5ZM2012.41 1320.5V1312.1H2013.57V1320.5ZM2013.53 1320.5V1303.7H2014.69V1320.5ZM2014.65 1320.5V1303.7H2015.81V1320.5ZM2015.77 1320.5V1303.7H2016.93V1320.5ZM2016.89 1320.5V1303.7H2018.05V1320.5ZM2018.01 1320.5V1303.7H2019.17V1320.5ZM2019.13 1320.5V1312.1H2020.30V1320.5ZM2020.26 1320.5V1303.7H2021.42V1320.5ZM2021.38 1320.5V1303.7H2022.54V1320.5ZM2022.50 1320.5V1312.1H2023.66V1320.5ZM2023.62 1320.5V1312.1H2024.78V1320.5ZM2024.74 1320.5V1303.7H2025.90V1320.5ZM2025.86 1320.5V1312.1H2027.02V1320.5ZM2026.98 1320.5V1303.7H2028.14V1320.5ZM2028.10 1320.5V1303.7H2029.26V1320.5ZM2029.22 1320.5V1312.1H2030.39V1320.5ZM2030.35 1320.5V1312.1H2031.51V1320.5ZM2031.47 1320.5V1312.1H2032.63V1320.5ZM2032.59 1320.5V1303.7H2033.75V1320.5ZM2033.71 1320.5V1303.7H2034.87V1320.5ZM2034.83 1320.5V1312.1H2035.99V1320.5ZM2035.95 1320.5V1303.7H2037.11V1320.5ZM2037.07 1320.5V1312.1H2038.23V1320.5ZM2038.19 1320.5V1312.1H2039.35V1320.5ZM2039.31 1320.5V1303.7H2040.47V1320.5ZM2040.43 1320.5V1312.1H2041.60V1320.5ZM2041.56 1320.5V1303.7H2042.72V1320.5ZM2042.68 1320.5V1312.1H2043.84V1320.5ZM2043.80 1320.5V1312.1H2044.96V1320.5ZM2044.92 1320.5V1312.1H2046.08V1320.5ZM2046.04 1320.5V1312.1H2047.20V1320.5ZM2047.16 1320.5V1303.7H2048.32V1320.5ZM2048.28 1320.5V1303.7H2049.44V1320.5ZM2049.40 1320.5V1312.1H2050.56V1320.5ZM2050.52 1320.5V1303.7H2051.68V1320.5ZM2051.64 1320.5V1303.7H2052.81V1320.5ZM2052.77 1320.5V1303.7H2053.93V1320.5ZM2053.89 1320.5V1303.7H2055.05V1320.5ZM2055.01 1320.5V1312.1H2056.17V1320.5ZM2056.13 1320.5V1303.7H2057.29V1320.5ZM2057.25 1320.5V1303.7H2058.41V1320.5ZM2058.37 1320.5V1312.1H2059.53V1320.5ZM2059.49 1320.5V1303.7H2060.65V1320.5ZM2060.61 1320.5V1303.7H2061.77V1320.5ZM2061.73 1320.5V1303.7H2062.89V1320.5ZM2062.86 1320.5V1303.7H2064.02V1320.5ZM2063.98 1320.5V1303.7H2065.14V1320.5ZM2065.10 1320.5V1303.7H2066.26V1320.5ZM2066.22 1320.5V1303.7H2067.38V1320.5ZM2067.34 1320.5V1303.7H2068.50V1320.5ZM2068.46 1320.5V1312.1H2069.62V1320.5ZM2069.58 1320.5V1303.7H2070.74V1320.5ZM2070.70 1320.5V1303.7H2071.86V1320.5ZM2071.82 1320.5V1312.1H2072.98V1320.5ZM2072.94 1320.5V1312.1H2074.11V1320.5ZM2074.07 1320.5V1303.7H2075.23V1320.5ZM2075.19 1320.5V1303.7H2076.35V1320.5ZM2076.31 1320.5V1303.7H2077.47V1320.5ZM2077.43 1320.5V1312.1H2078.59V1320.5ZM2078.55 1320.5V1312.1H2079.71V1320.5ZM2079.67 1320.5V1312.1H2080.83V1320.5ZM2080.79 1320.5V1303.7H2081.95V1320.5ZM2081.91 1320.5V1303.7H2083.07V1320.5ZM2083.03 1320.5V1312.1H2084.19V1320.5ZM2084.15 1320.5V1303.7H2085.32V1320.5ZM2085.28 1320.5V1303.7H2086.44V1320.5ZM2086.40 1320.5V1303.7H2087.56V1320.5ZM2087.52 1320.5V1312.1H2088.68V1320.5ZM2088.64 1320.5V1312.1H2089.80V1320.5ZM2089.76 1320.5V1303.7H2090.92V1320.5ZM2090.88 1320.5V1303.7H2092.04V1320.5ZM2092.00 1320.5V1303.7H2093.16V1320.5ZM2093.12 1320.5V1303.7H2094.28V1320.5ZM2094.24 1320.5V1303.7H2095.40V1320.5ZM2095.36 1320.5V1303.7H2096.53V1320.5ZM2096.49 1320.5V1303.7H2097.65V1320.5ZM2097.61 1320.5V1303.7H2098.77V1320.5ZM2098.73 1320.5V1303.7H2099.89V1320.5ZM2099.85 1320.5V1312.1H2101.01V1320.5ZM2100.97 1320.5V1312.1H2102.13V1320.5ZM2102.09 1320.5V1312.1H2103.25V1320.5ZM2103.21 1320.5V1303.7H2104.37V1320.5ZM2104.33 1320.5V1303.7H2105.49V1320.5ZM2105.45 1320.5V1312.1H2106.62V1320.5ZM2106.58 1320.5V1312.1H2107.74V1320.5ZM2107.70 1320.5V1303.7H2108.86V1320.5ZM2108.82 1320.5V1312.1H2109.98V1320.5ZM2109.94 1320.5V1312.1H2111.10V1320.5ZM2111.06 1320.5V1303.7H2112.22V1320.5ZM2112.18 1320.5V1303.7H2113.34V1320.5ZM2113.30 1320.5V1312.1H2114.46V1320.5ZM2114.42 1320.5V1312.1H2115.58V1320.5ZM2115.54 1320.5V1303.7H2116.70V1320.5ZM2116.66 1320.5V1303.7H2117.83V1320.5ZM2117.79 1320.5V1312.1H2118.95V1320.5ZM2118.91 1320.5V1312.1H2120.07V1320.5ZM2120.03 1320.5V1303.7H2121.19V1320.5ZM2121.15 1320.5V1312.1H2122.31V1320.5ZM2122.27 1320.5V1303.7H2123.43V1320.5ZM2123.39 1320.5V1303.7H2124.55V1320.5ZM2124.51 1320.5V1303.7H2125.67V1320.5ZM2125.63 1320.5V1303.7H2126.79V1320.5ZM2126.75 1320.5V1303.7H2127.91V1320.5ZM2127.87 1320.5V1303.7H2129.04V1320.5ZM2129.00 1320.5V1312.1H2130.16V1320.5ZM2130.12 1320.5V1303.7H2131.28V1320.5ZM2131.24 1320.5V1312.1H2132.40V1320.5ZM2132.36 1320.5V1312.1H2133.52V1320.5ZM2133.48 1320.5V1303.7H2134.64V1320.5ZM2134.60 1320.5V1303.7H2135.76V1320.5ZM2135.72 1320.5V1303.7H2136.88V1320.5ZM2136.84 1320.5V1303.7H2138.00V1320.5ZM2137.96 1320.5V1303.7H2139.13V1320.5ZM2139.09 1320.5V1312.1H2140.25V1320.5ZM2140.21 1320.5V1303.7H2141.37V1320.5ZM2141.33 1320.5V1303.7H2142.49V1320.5ZM2142.45 1320.5V1303.7H2143.61V1320.5ZM2143.57 1320.5V1312.1H2144.73V1320.5ZM2144.69 1320.5V1312.1H2145.85V1320.5ZM2145.81 1320.5V1303.7H2146.97V1320.5ZM2146.93 1320.5V1303.7H2148.09V1320.5ZM2148.05 1320.5V1303.7H2149.21V1320.5ZM2149.17 1320.5V1312.1H2150.34V1320.5ZM2150.30 1320.5V1303.7H2151.46V1320.5ZM2151.42 1320.5V1303.7H2152.58V1320.5ZM2152.54 1320.5V1303.7H2153.70V1320.5ZM2153.66 1320.5V1312.1H2154.82V1320.5ZM2154.78 1320.5V1303.7H2155.94V1320.5ZM2155.90 1320.5V1303.7H2157.06V1320.5ZM2157.02 1320.5V1312.1H2158.18V1320.5ZM2158.14 1320.5V1303.7H2159.30V1320.5ZM2159.26 1320.5V1303.7H2160.42V1320.5ZM2160.38 1320.5V1312.1H2161.55V1320.5ZM2161.51 1320.5V1303.7H2162.67V1320.5ZM2162.63 1320.5V1312.1H2163.79V1320.5ZM2163.75 1320.5V1312.1H2164.91V1320.5ZM2164.87 1320.5V1312.1H2166.03V1320.5ZM2165.99 1320.5V1303.7H2167.15V1320.5ZM2167.11 1320.5V1303.7H2168.27V1320.5ZM2168.23 1320.5V1303.7H2169.39V1320.5ZM2169.35 1320.5V1303.7H2170.51V1320.5ZM2170.47 1320.5V1312.1H2171.64V1320.5ZM2171.60 1320.5V1303.7H2172.76V1320.5ZM2172.72 1320.5V1303.7H2173.88V1320.5ZM2173.84 1320.5V1303.7H2175.00V1320.5ZM2174.96 1320.5V1303.7H2176.12V1320.5ZM2176.08 1320.5V1303.7H2177.24V1320.5ZM2177.20 1320.5V1303.7H2178.36V1320.5ZM2178.32 1320.5V1303.7H2179.48V1320.5ZM2179.44 1320.5V1312.1H2180.60V1320.5ZM2180.56 1320.5V1303.7H2181.72V1320.5ZM2181.68 1320.5V1303.7H2182.85V1320.5ZM2182.81 1320.5V1312.1H2183.97V1320.5ZM2183.93 1320.5V1303.7H2185.09V1320.5ZM2185.05 1320.5V1312.1H2186.21V1320.5ZM2186.17 1320.5V1303.7H2187.33V1320.5ZM2187.29 1320.5V1303.7H2188.45V1320.5ZM2188.41 1320.5V1303.7H2189.57V1320.5ZM2189.53 1320.5V1312.1H2190.69V1320.5ZM2190.65 1320.5V1312.1H2191.81V1320.5ZM2191.77 1320.5V1312.1H2192.93V1320.5ZM2192.89 1320.5V1303.7H2194.06V1320.5ZM2194.02 1320.5V1303.7H2195.18V1320.5ZM2195.14 1320.5V1303.7H2196.30V1320.5ZM2196.26 1320.5V1303.7H2197.42V1320.5ZM2197.38 1320.5V1303.7H2198.54V1320.5ZM2198.50 1320.5V1312.1H2199.66V1320.5ZM2199.62 1320.5V1303.7H2200.78V1320.5ZM2200.74 1320.5V1303.7H2201.90V1320.5ZM2201.86 1320.5V1303.7H2203.02V1320.5ZM2202.98 1320.5V1303.7H2204.14V1320.5ZM2204.11 1320.5V1303.7H2205.27V1320.5ZM2205.23 1320.5V1303.7H2206.39V1320.5ZM2206.35 1320.5V1312.1H2207.51V1320.5ZM2207.47 1320.5V1303.7H2208.63V1320.5ZM2208.59 1320.5V1303.7H2209.75V1320.5ZM2209.71 1320.5V1303.7H2210.87V1320.5ZM2210.83 1320.5V1303.7H2211.99V1320.5ZM2211.95 1320.5V1303.7H2213.11V1320.5ZM2213.07 1320.5V1303.7H2214.23V1320.5ZM2214.19 1320.5V1303.7H2215.36V1320.5ZM2215.32 1320.5V1303.7H2216.48V1320.5ZM2216.44 1320.5V1312.1H2217.60V1320.5ZM2217.56 1320.5V1303.7H2218.72V1320.5ZM2218.68 1320.5V1303.7H2219.84V1320.5ZM2219.80 1320.5V1303.7H2220.96V1320.5ZM2220.92 1320.5V1303.7H2222.08V1320.5ZM2222.04 1320.5V1303.7H2223.20V1320.5ZM2223.16 1320.5V1303.7H2224.32V1320.5ZM2224.28 1320.5V1295.2H2225.44V1320.5ZM2225.40 1320.5V1303.7H2226.57V1320.5ZM2226.53 1320.5V1303.7H2227.69V1320.5ZM2227.65 1320.5V1303.7H2228.81V1320.5ZM2228.77 1320.5V1312.1H2229.93V1320.5ZM2229.89 1320.5V1312.1H2231.05V1320.5ZM2231.01 1320.5V1303.7H2232.17V1320.5ZM2232.13 1320.5V1303.7H2233.29V1320.5ZM2233.25 1320.5V1303.7H2234.41V1320.5ZM2234.37 1320.5V1303.7H2235.53V1320.5ZM2235.49 1320.5V1312.1H2236.65V1320.5ZM2236.61 1320.5V1312.1H2237.78V1320.5ZM2237.74 1320.5V1312.1H2238.90V1320.5ZM2238.86 1320.5V1312.1H2240.02V1320.5ZM2239.98 1320.5V1303.7H2241.14V1320.5ZM2241.10 1320.5V1303.7H2242.26V1320.5ZM2242.22 1320.5V1303.7H2243.38V1320.5ZM2243.34 1320.5V1303.7H2244.50V1320.5ZM2244.46 1320.5V1303.7H2245.62V1320.5ZM2245.58 1320.5V1303.7H2246.74V1320.5ZM2246.70 1320.5V1303.7H2247.87V1320.5ZM2247.83 1320.5V1303.7H2248.99V1320.5ZM2248.95 1320.5V1312.1H2250.11V1320.5ZM2250.07 1320.5V1303.7H2251.23V1320.5ZM2251.19 1320.5V1303.7H2252.35V1320.5ZM2252.31 1320.5V1303.7H2253.47V1320.5ZM2253.43 1320.5V1303.7H2254.59V1320.5ZM2254.55 1320.5V1312.1H2255.71V1320.5ZM2255.67 1320.5V1312.1H2256.83V1320.5ZM2256.79 1320.5V1312.1H2257.95V1320.5ZM2257.91 1320.5V1303.7H2259.08V1320.5ZM2259.04 1320.5V1303.7H2260.20V1320.5ZM2260.16 1320.5V1303.7H2261.32V1320.5ZM2261.28 1320.5V1312.1H2262.44V1320.5ZM2262.40 1320.5V1303.7H2263.56V1320.5ZM2263.52 1320.5V1312.1H2264.68V1320.5ZM2264.64 1320.5V1303.7H2265.80V1320.5ZM2265.76 1320.5V1303.7H2266.92V1320.5ZM2266.88 1320.5V1312.1H2268.04V1320.5ZM2268.00 1320.5V1303.7H2269.16V1320.5ZM2269.12 1320.5V1312.1H2270.29V1320.5ZM2270.25 1320.5V1303.7H2271.41V1320.5ZM2271.37 1320.5V1303.7H2272.53V1320.5ZM2272.49 1320.5V1303.7H2273.65V1320.5ZM2273.61 1320.5V1303.7H2274.77V1320.5ZM2274.73 1320.5V1303.7H2275.89V1320.5ZM2275.85 1320.5V1303.7H2277.01V1320.5ZM2276.97 1320.5V1303.7H2278.13V1320.5ZM2278.09 1320.5V1312.1H2279.25V1320.5ZM2279.21 1320.5V1312.1H2280.38V1320.5ZM2280.34 1320.5V1312.1H2281.50V1320.5ZM2281.46 1320.5V1303.7H2282.62V1320.5ZM2282.58 1320.5V1312.1H2283.74V1320.5ZM2283.70 1320.5V1303.7H2284.86V1320.5ZM2284.82 1320.5V1303.7H2285.98V1320.5ZM2285.94 1320.5V1312.1H2287.10V1320.5ZM2287.06 1320.5V1303.7H2288.22V1320.5ZM2288.18 1320.5V1303.7H2289.34V1320.5ZM2289.30 1320.5V1303.7H2290.46V1320.5ZM2290.42 1320.5V1303.7H2291.59V1320.5ZM2291.55 1320.5V1312.1H2292.71V1320.5ZM2292.67 1320.5V1312.1H2293.83V1320.5ZM2293.79 1320.5V1303.7H2294.95V1320.5ZM2294.91 1320.5V1303.7H2296.07V1320.5ZM2296.03 1320.5V1312.1H2297.19V1320.5ZM2297.15 1320.5V1312.1H2298.31V1320.5ZM2298.27 1320.5V1312.1H2299.43V1320.5ZM2299.39 1320.5V1303.7H2300.55V1320.5ZM2300.51 1320.5V1312.1H2301.67V1320.5ZM2301.63 1320.5V1303.7H2302.80V1320.5ZM2302.76 1320.5V1303.7H2303.92V1320.5ZM2303.88 1320.5V1303.7H2305.04V1320.5ZM2305.00 1320.5V1303.7H2306.16V1320.5ZM2306.12 1320.5V1303.7H2307.28V1320.5ZM2307.24 1320.5V1303.7H2308.40V1320.5Z" fill="#9eebc3"/>
<path d="M236.69 1320.5V1295.2H237.86V1320.5ZM237.82 1320.5V1303.7H238.98V1320.5ZM238.94 1320.5V1303.7H240.10V1320.5ZM240.06 1320.5V1303.7H241.22V1320.5ZM241.18 1320.5V1295.2H242.34V1320.5ZM242.30 1320.5V1303.7H243.46V1320.5ZM243.42 1320.5V1303.7H244.58V1320.5ZM244.54 1320.5V1303.7H245.70V1320.5ZM245.66 1320.5V1303.7H246.82V1320.5ZM246.78 1320.5V1303.7H247.94V1320.5ZM247.90 1320.5V1303.7H249.07V1320.5ZM249.03 1320.5V1303.7H250.19V1320.5ZM250.15 1320.5V1303.7H251.31V1320.5ZM251.27 1320.5V1303.7H252.43V1320.5ZM252.39 1320.5V1303.7H253.55V1320.5ZM253.51 1320.5V1303.7H254.67V1320.5ZM254.63 1320.5V1303.7H255.79V1320.5ZM255.75 1320.5V1303.7H256.91V1320.5ZM256.87 1320.5V1295.2H258.03V1320.5ZM257.99 1320.5V1303.7H259.15V1320.5ZM259.11 1320.5V1303.7H260.28V1320.5ZM260.24 1320.5V1303.7H261.40V1320.5ZM261.36 1320.5V1303.7H262.52V1320.5ZM262.48 1320.5V1295.2H263.64V1320.5ZM263.60 1320.5V1295.2H264.76V1320.5ZM264.72 1320.5V1303.7H265.88V1320.5ZM265.84 1320.5V1303.7H267.00V1320.5ZM266.96 1320.5V1312.1H268.12V1320.5ZM268.08 1320.5V1303.7H269.24V1320.5ZM269.20 1320.5V1295.2H270.37V1320.5ZM270.33 1320.5V1303.7H271.49V1320.5ZM271.45 1320.5V1303.7H272.61V1320.5ZM272.57 1320.5V1303.7H273.73V1320.5ZM273.69 1320.5V1303.7H274.85V1320.5ZM274.81 1320.5V1303.7H275.97V1320.5ZM275.93 1320.5V1303.7H277.09V1320.5ZM277.05 1320.5V1303.7H278.21V1320.5ZM278.17 1320.5V1303.7H279.33V1320.5ZM279.29 1320.5V1303.7H280.45V1320.5ZM280.41 1320.5V1303.7H281.58V1320.5ZM281.54 1320.5V1303.7H282.70V1320.5ZM282.66 1320.5V1303.7H283.82V1320.5ZM283.78 1320.5V1303.7H284.94V1320.5ZM284.90 1320.5V1303.7H286.06V1320.5ZM286.02 1320.5V1303.7H287.18V1320.5ZM287.14 1320.5V1303.7H288.30V1320.5ZM288.26 1320.5V1303.7H289.42V1320.5ZM289.38 1320.5V1303.7H290.54V1320.5ZM290.50 1320.5V1303.7H291.66V1320.5ZM291.62 1320.5V1303.7H292.79V1320.5ZM292.75 1320.5V1303.7H293.91V1320.5ZM293.87 1320.5V1303.7H295.03V1320.5ZM294.99 1320.5V1303.7H296.15V1320.5ZM296.11 1320.5V1303.7H297.27V1320.5ZM297.23 1320.5V1303.7H298.39V1320.5ZM298.35 1320.5V1303.7H299.51V1320.5ZM299.47 1320.5V1303.7H300.63V1320.5ZM300.59 1320.5V1303.7H301.75V1320.5ZM301.71 1320.5V1303.7H302.88V1320.5ZM302.84 1320.5V1303.7H304.00V1320.5ZM303.96 1320.5V1303.7H305.12V1320.5ZM305.08 1320.5V1303.7H306.24V1320.5ZM306.20 1320.5V1303.7H307.36V1320.5ZM307.32 1320.5V1303.7H308.48V1320.5ZM308.44 1320.5V1303.7H309.60V1320.5ZM309.56 1320.5V1303.7H310.72V1320.5ZM310.68 1320.5V1303.7H311.84V1320.5ZM311.80 1320.5V1303.7H312.96V1320.5ZM312.92 1320.5V1303.7H314.09V1320.5ZM314.05 1320.5V1303.7H315.21V1320.5ZM315.17 1320.5V1303.7H316.33V1320.5ZM316.29 1320.5V1303.7H317.45V1320.5ZM317.41 1320.5V1303.7H318.57V1320.5ZM318.53 1320.5V1303.7H319.69V1320.5ZM319.65 1320.5V1295.2H320.81V1320.5ZM320.77 1320.5V1303.7H321.93V1320.5ZM321.89 1320.5V1303.7H323.05V1320.5ZM323.01 1320.5V1303.7H324.17V1320.5ZM324.13 1320.5V1303.7H325.30V1320.5ZM325.26 1320.5V1303.7H326.42V1320.5ZM326.38 1320.5V1303.7H327.54V1320.5ZM327.50 1320.5V1303.7H328.66V1320.5ZM328.62 1320.5V1303.7H329.78V1320.5ZM329.74 1320.5V1303.7H330.90V1320.5ZM330.86 1320.5V1303.7H332.02V1320.5ZM331.98 1320.5V1303.7H333.14V1320.5ZM333.10 1320.5V1303.7H334.26V1320.5ZM334.22 1320.5V1303.7H335.39V1320.5ZM335.35 1320.5V1303.7H336.51V1320.5ZM336.47 1320.5V1303.7H337.63V1320.5ZM337.59 1320.5V1303.7H338.75V1320.5ZM338.71 1320.5V1303.7H339.87V1320.5ZM339.83 1320.5V1303.7H340.99V1320.5ZM340.95 1320.5V1303.7H342.11V1320.5ZM342.07 1320.5V1303.7H343.23V1320.5ZM343.19 1320.5V1303.7H344.35V1320.5ZM344.31 1320.5V1303.7H345.47V1320.5ZM345.43 1320.5V1303.7H346.60V1320.5ZM346.56 1320.5V1303.7H347.72V1320.5ZM347.68 1320.5V1303.7H348.84V1320.5ZM348.80 1320.5V1303.7H349.96V1320.5ZM349.92 1320.5V1303.7H351.08V1320.5ZM351.04 1320.5V1303.7H352.20V1320.5ZM352.16 1320.5V1303.7H353.32V1320.5ZM353.28 1320.5V1303.7H354.44V1320.5ZM354.40 1320.5V1303.7H355.56V1320.5ZM355.52 1320.5V1295.2H356.68V1320.5ZM356.64 1320.5V1303.7H357.81V1320.5ZM357.77 1320.5V1303.7H358.93V1320.5ZM358.89 1320.5V1303.7H360.05V1320.5ZM360.01 1320.5V1303.7H361.17V1320.5ZM361.13 1320.5V1303.7H362.29V1320.5ZM362.25 1320.5V1303.7H363.41V1320.5ZM363.37 1320.5V1303.7H364.53V1320.5ZM364.49 1320.5V1303.7H365.65V1320.5ZM365.61 1320.5V1295.2H366.77V1320.5ZM366.73 1320.5V1303.7H367.89V1320.5ZM367.86 1320.5V1303.7H369.02V1320.5ZM368.98 1320.5V1303.7H370.14V1320.5ZM370.10 1320.5V1303.7H371.26V1320.5ZM371.22 1320.5V1303.7H372.38V1320.5ZM372.34 1320.5V1303.7H373.50V1320.5ZM373.46 1320.5V1303.7H374.62V1320.5ZM374.58 1320.5V1303.7H375.74V1320.5ZM375.70 1320.5V1303.7H376.86V1320.5ZM376.82 1320.5V1303.7H377.98V1320.5ZM377.94 1320.5V1303.7H379.11V1320.5ZM379.07 1320.5V1303.7H380.23V1320.5ZM380.19 1320.5V1303.7H381.35V1320.5ZM381.31 1320.5V1303.7H382.47V1320.5ZM382.43 1320.5V1303.7H383.59V1320.5ZM383.55 1320.5V1303.7H384.71V1320.5ZM559.55 1320.5V1303.7H560.71V1320.5ZM560.67 1320.5V1303.7H561.83V1320.5ZM561.79 1320.5V1303.7H562.95V1320.5ZM562.91 1320.5V1303.7H564.08V1320.5ZM564.04 1320.5V1303.7H565.20V1320.5ZM565.16 1320.5V1295.2H566.32V1320.5ZM566.28 1320.5V1303.7H567.44V1320.5ZM567.40 1320.5V1303.7H568.56V1320.5ZM568.52 1320.5V1211.0H569.68V1320.5ZM569.64 1320.5V1211.0H570.80V1320.5ZM570.76 1320.5V1152.0H571.92V1320.5ZM571.88 1320.5V1118.3H573.04V1320.5ZM573.00 1320.5V1118.3H574.16V1320.5ZM574.12 1320.5V966.6H575.29V1320.5ZM575.25 1320.5V949.8H576.41V1320.5ZM576.37 1320.5V924.5H577.53V1320.5ZM577.49 1320.5V907.7H578.65V1320.5ZM578.61 1320.5V1000.3H579.77V1320.5ZM579.73 1320.5V933.0H580.89V1320.5ZM580.85 1320.5V1084.6H582.01V1320.5ZM581.97 1320.5V1118.3H583.13V1320.5ZM583.09 1320.5V1135.2H584.25V1320.5ZM584.21 1320.5V1152.0H585.38V1320.5ZM585.34 1320.5V1109.9H586.50V1320.5ZM586.46 1320.5V1084.6H587.62V1320.5ZM587.58 1320.5V1050.9H588.74V1320.5ZM588.70 1320.5V1059.3H589.86V1320.5ZM589.82 1320.5V1177.3H590.98V1320.5ZM590.94 1320.5V1177.3H592.10V1320.5ZM592.06 1320.5V1185.7H593.22V1320.5ZM593.18 1320.5V1109.9H594.34V1320.5ZM594.30 1320.5V1160.4H595.46V1320.5ZM595.42 1320.5V1084.6H596.59V1320.5ZM596.55 1320.5V1008.8H597.71V1320.5ZM597.67 1320.5V966.6H598.83V1320.5ZM598.79 1320.5V1042.5H599.95V1320.5ZM599.91 1320.5V958.2H601.07V1320.5ZM601.03 1320.5V1152.0H602.19V1320.5ZM602.15 1320.5V1143.6H603.31V1320.5ZM603.27 1320.5V1126.7H604.43V1320.5ZM604.39 1320.5V1194.1H605.55V1320.5ZM605.51 1320.5V1160.4H606.67V1320.5ZM606.63 1320.5V1177.3H607.80V1320.5ZM607.76 1320.5V1185.7H608.92V1320.5ZM608.88 1320.5V1093.0H610.04V1320.5ZM610.00 1320.5V1152.0H611.16V1320.5ZM611.12 1320.5V1177.3H612.28V1320.5ZM612.24 1320.5V1185.7H613.40V1320.5ZM613.36 1320.5V1168.8H614.52V1320.5ZM614.48 1320.5V1143.6H615.64V1320.5ZM615.60 1320.5V975.1H616.76V1320.5ZM616.72 1320.5V958.2H617.89V1320.5ZM617.85 1320.5V941.4H619.01V1320.5ZM618.97 1320.5V958.2H620.13V1320.5ZM620.09 1320.5V958.2H621.25V1320.5ZM621.21 1320.5V1093.0H622.37V1320.5ZM622.33 1320.5V1084.6H623.49V1320.5ZM623.45 1320.5V1076.2H624.61V1320.5ZM624.57 1320.5V1101.5H625.73V1320.5ZM625.69 1320.5V1118.3H626.85V1320.5ZM626.81 1320.5V1042.5H627.97V1320.5ZM627.93 1320.5V1059.3H629.10V1320.5ZM629.06 1320.5V1084.6H630.22V1320.5ZM630.18 1320.5V1185.7H631.34V1320.5ZM631.30 1320.5V1152.0H632.46V1320.5ZM632.42 1320.5V1059.3H633.58V1320.5ZM633.54 1320.5V1168.8H634.70V1320.5ZM634.66 1320.5V1126.7H635.82V1320.5ZM635.78 1320.5V1126.7H636.94V1320.5ZM636.90 1320.5V1126.7H638.06V1320.5ZM638.02 1320.5V1126.7H639.18V1320.5ZM639.14 1320.5V1126.7H640.31V1320.5ZM640.27 1320.5V1126.7H641.43V1320.5ZM641.39 1320.5V1076.2H642.55V1320.5ZM642.51 1320.5V1093.0H643.67V1320.5ZM643.63 1320.5V1101.5H644.79V1320.5ZM644.75 1320.5V1143.6H645.91V1320.5ZM645.87 1320.5V1143.6H647.03V1320.5ZM646.99 1320.5V1185.7H648.15V1320.5ZM648.11 1320.5V1185.7H649.27V1320.5ZM649.23 1320.5V1194.1H650.39V1320.5ZM650.36 1320.5V1194.1H651.52V1320.5ZM651.48 1320.5V1211.0H652.64V1320.5ZM652.60 1320.5V1152.0H653.76V1320.5ZM653.72 1320.5V1143.6H654.88V1320.5ZM654.84 1320.5V1076.2H656.00V1320.5ZM655.96 1320.5V1135.2H657.12V1320.5ZM657.08 1320.5V983.5H658.24V1320.5ZM658.20 1320.5V1017.2H659.36V1320.5ZM659.32 1320.5V1067.8H660.48V1320.5ZM660.44 1320.5V1135.2H661.61V1320.5ZM661.57 1320.5V1143.6H662.73V1320.5ZM662.69 1320.5V1143.6H663.85V1320.5ZM663.81 1320.5V1168.8H664.97V1320.5ZM664.93 1320.5V1194.1H666.09V1320.5ZM666.05 1320.5V1202.5H667.21V1320.5ZM667.17 1320.5V1202.5H668.33V1320.5ZM668.29 1320.5V1219.4H669.45V1320.5ZM669.41 1320.5V1219.4H670.57V1320.5ZM670.53 1320.5V1194.1H671.69V1320.5ZM671.65 1320.5V1177.3H672.82V1320.5ZM672.78 1320.5V1194.1H673.94V1320.5ZM673.90 1320.5V1202.5H675.06V1320.5ZM675.02 1320.5V1202.5H676.18V1320.5ZM676.14 1320.5V1168.8H677.30V1320.5ZM677.26 1320.5V1126.7H678.42V1320.5ZM678.38 1320.5V949.8H679.54V1320.5ZM679.50 1320.5V941.4H680.66V1320.5ZM680.62 1320.5V1034.0H681.78V1320.5ZM681.74 1320.5V1034.0H682.90V1320.5ZM682.86 1320.5V1093.0H684.03V1320.5ZM683.99 1320.5V1168.8H685.15V1320.5ZM685.11 1320.5V1219.4H686.27V1320.5ZM686.23 1320.5V1219.4H687.39V1320.5ZM687.35 1320.5V1194.1H688.51V1320.5ZM688.47 1320.5V1168.8H689.63V1320.5ZM689.59 1320.5V1135.2H690.75V1320.5ZM690.71 1320.5V1143.6H691.87V1320.5ZM691.83 1320.5V1152.0H692.99V1320.5ZM692.95 1320.5V1135.2H694.12V1320.5ZM694.08 1320.5V1202.5H695.24V1320.5ZM695.20 1320.5V1202.5H696.36V1320.5ZM696.32 1320.5V1219.4H697.48V1320.5ZM697.44 1320.5V1227.8H698.60V1320.5ZM698.56 1320.5V1236.2H699.72V1320.5ZM699.68 1320.5V1253.1H700.84V1320.5ZM700.80 1320.5V1253.1H701.96V1320.5ZM701.92 1320.5V1261.5H703.08V1320.5ZM703.04 1320.5V1286.8H704.20V1320.5ZM704.16 1320.5V1295.2H705.33V1320.5ZM705.29 1320.5V1303.7H706.45V1320.5ZM706.41 1320.5V1303.7H707.57V1320.5ZM882.41 1320.5V1303.7H883.57V1320.5ZM883.53 1320.5V1303.7H884.69V1320.5ZM884.65 1320.5V1303.7H885.81V1320.5ZM885.77 1320.5V1303.7H886.93V1320.5ZM886.89 1320.5V1303.7H888.05V1320.5ZM888.01 1320.5V1303.7H889.17V1320.5ZM889.13 1320.5V1303.7H890.30V1320.5ZM890.26 1320.5V1295.2H891.42V1320.5ZM891.38 1320.5V1303.7H892.54V1320.5ZM892.50 1320.5V1303.7H893.66V1320.5ZM893.62 1320.5V1303.7H894.78V1320.5ZM894.74 1320.5V1295.2H895.90V1320.5ZM895.86 1320.5V1261.5H897.02V1320.5ZM896.98 1320.5V1109.9H898.14V1320.5ZM898.10 1320.5V1109.9H899.26V1320.5ZM899.22 1320.5V1101.5H900.39V1320.5ZM900.35 1320.5V1101.5H901.51V1320.5ZM901.47 1320.5V1168.8H902.63V1320.5ZM902.59 1320.5V1168.8H903.75V1320.5ZM903.71 1320.5V1059.3H904.87V1320.5ZM904.83 1320.5V1008.8H905.99V1320.5ZM905.95 1320.5V966.6H907.11V1320.5ZM907.07 1320.5V907.7H908.23V1320.5ZM908.19 1320.5V949.8H909.35V1320.5ZM909.31 1320.5V975.1H910.47V1320.5ZM910.43 1320.5V941.4H911.60V1320.5ZM911.56 1320.5V1067.8H912.72V1320.5ZM912.68 1320.5V949.8H913.84V1320.5ZM913.80 1320.5V1076.2H914.96V1320.5ZM914.92 1320.5V924.5H916.08V1320.5ZM916.04 1320.5V933.0H917.20V1320.5ZM917.16 1320.5V1008.8H918.32V1320.5ZM918.28 1320.5V1034.0H919.44V1320.5ZM919.40 1320.5V1076.2H920.56V1320.5ZM920.52 1320.5V1152.0H921.68V1320.5ZM921.64 1320.5V1152.0H922.81V1320.5ZM922.77 1320.5V1118.3H923.93V1320.5ZM923.89 1320.5V1109.9H925.05V1320.5ZM925.01 1320.5V1093.0H926.17V1320.5ZM926.13 1320.5V1093.0H927.29V1320.5ZM927.25 1320.5V1000.3H928.41V1320.5ZM928.37 1320.5V1000.3H929.53V1320.5ZM929.49 1320.5V966.6H930.65V1320.5ZM930.61 1320.5V966.6H931.77V1320.5ZM931.73 1320.5V966.6H932.89V1320.5ZM932.86 1320.5V991.9H934.02V1320.5ZM933.98 1320.5V1008.8H935.14V1320.5ZM935.10 1320.5V1118.3H936.26V1320.5ZM936.22 1320.5V1034.0H937.38V1320.5ZM937.34 1320.5V975.1H938.50V1320.5ZM938.46 1320.5V983.5H939.62V1320.5ZM939.58 1320.5V991.9H940.74V1320.5ZM940.70 1320.5V1008.8H941.86V1320.5ZM941.82 1320.5V1034.0H942.98V1320.5ZM942.94 1320.5V1034.0H944.11V1320.5ZM944.07 1320.5V1067.8H945.23V1320.5ZM945.19 1320.5V1067.8H946.35V1320.5ZM946.31 1320.5V1067.8H947.47V1320.5ZM947.43 1320.5V1017.2H948.59V1320.5ZM948.55 1320.5V1017.2H949.71V1320.5ZM949.67 1320.5V1008.8H950.83V1320.5ZM950.79 1320.5V1076.2H951.95V1320.5ZM951.91 1320.5V1076.2H953.07V1320.5ZM953.03 1320.5V1109.9H954.19V1320.5ZM954.15 1320.5V1118.3H955.32V1320.5ZM955.28 1320.5V1126.7H956.44V1320.5ZM956.40 1320.5V1109.9H957.56V1320.5ZM957.52 1320.5V1101.5H958.68V1320.5ZM958.64 1320.5V1143.6H959.80V1320.5ZM959.76 1320.5V1160.4H960.92V1320.5ZM960.88 1320.5V1101.5H962.04V1320.5ZM962.00 1320.5V1109.9H963.16V1320.5ZM963.12 1320.5V1101.5H964.28V1320.5ZM964.24 1320.5V1093.0H965.40V1320.5ZM965.36 1320.5V1135.2H966.53V1320.5ZM966.49 1320.5V1135.2H967.65V1320.5ZM967.61 1320.5V1185.7H968.77V1320.5ZM968.73 1320.5V1185.7H969.89V1320.5ZM969.85 1320.5V1202.5H971.01V1320.5ZM970.97 1320.5V1219.4H972.13V1320.5ZM972.09 1320.5V1236.2H973.25V1320.5ZM973.21 1320.5V1236.2H974.37V1320.5ZM974.33 1320.5V1236.2H975.49V1320.5ZM975.45 1320.5V1261.5H976.62V1320.5ZM976.58 1320.5V1244.7H977.74V1320.5ZM977.70 1320.5V1244.7H978.86V1320.5ZM978.82 1320.5V1244.7H979.98V1320.5ZM979.94 1320.5V1253.1H981.10V1320.5ZM981.06 1320.5V1244.7H982.22V1320.5ZM982.18 1320.5V1236.2H983.34V1320.5ZM983.30 1320.5V1025.6H984.46V1320.5ZM984.42 1320.5V975.1H985.58V1320.5ZM985.54 1320.5V1025.6H986.70V1320.5ZM986.66 1320.5V1067.8H987.83V1320.5ZM987.79 1320.5V1177.3H988.95V1320.5ZM988.91 1320.5V1160.4H990.07V1320.5ZM990.03 1320.5V1227.8H991.19V1320.5ZM991.15 1320.5V1211.0H992.31V1320.5ZM992.27 1320.5V1168.8H993.43V1320.5ZM993.39 1320.5V1126.7H994.55V1320.5ZM994.51 1320.5V1177.3H995.67V1320.5ZM995.63 1320.5V1152.0H996.79V1320.5ZM996.75 1320.5V1143.6H997.91V1320.5ZM997.87 1320.5V1185.7H999.04V1320.5ZM999.00 1320.5V1211.0H1000.16V1320.5ZM1000.12 1320.5V1227.8H1001.28V1320.5ZM1001.24 1320.5V1211.0H1002.40V1320.5ZM1002.36 1320.5V1202.5H1003.52V1320.5ZM1003.48 1320.5V1236.2H1004.64V1320.5ZM1004.60 1320.5V1211.0H1005.76V1320.5ZM1005.72 1320.5V1185.7H1006.88V1320.5ZM1006.84 1320.5V1101.5H1008.00V1320.5ZM1007.96 1320.5V1050.9H1009.13V1320.5ZM1009.09 1320.5V1227.8H1010.25V1320.5ZM1010.21 1320.5V1236.2H1011.37V1320.5ZM1011.33 1320.5V1236.2H1012.49V1320.5ZM1012.45 1320.5V1219.4H1013.61V1320.5ZM1013.57 1320.5V1185.7H1014.73V1320.5ZM1014.69 1320.5V1152.0H1015.85V1320.5ZM1015.81 1320.5V1135.2H1016.97V1320.5ZM1016.93 1320.5V1109.9H1018.09V1320.5ZM1018.05 1320.5V983.5H1019.21V1320.5ZM1019.17 1320.5V1076.2H1020.34V1320.5ZM1020.30 1320.5V1109.9H1021.46V1320.5ZM1021.42 1320.5V1168.8H1022.58V1320.5ZM1022.54 1320.5V1126.7H1023.70V1320.5ZM1023.66 1320.5V1194.1H1024.82V1320.5ZM1024.78 1320.5V1253.1H1025.94V1320.5ZM1025.90 1320.5V1253.1H1027.06V1320.5ZM1027.02 1320.5V1303.7H1028.18V1320.5ZM1028.14 1320.5V1303.7H1029.30V1320.5ZM1029.26 1320.5V1303.7H1030.42V1320.5ZM1205.27 1320.5V1303.7H1206.43V1320.5ZM1206.39 1320.5V1295.2H1207.55V1320.5ZM1207.51 1320.5V1303.7H1208.67V1320.5ZM1208.63 1320.5V1303.7H1209.79V1320.5ZM1209.75 1320.5V1295.2H1210.91V1320.5ZM1210.87 1320.5V1303.7H1212.03V1320.5ZM1211.99 1320.5V1295.2H1213.15V1320.5ZM1213.11 1320.5V1295.2H1214.27V1320.5ZM1214.23 1320.5V1270.0H1215.39V1320.5ZM1215.36 1320.5V1227.8H1216.52V1320.5ZM1216.48 1320.5V1135.2H1217.64V1320.5ZM1217.60 1320.5V1076.2H1218.76V1320.5ZM1218.72 1320.5V1076.2H1219.88V1320.5ZM1219.84 1320.5V975.1H1221.00V1320.5ZM1220.96 1320.5V933.0H1222.12V1320.5ZM1222.08 1320.5V966.6H1223.24V1320.5ZM1223.20 1320.5V1084.6H1224.36V1320.5ZM1224.32 1320.5V958.2H1225.48V1320.5ZM1225.44 1320.5V933.0H1226.61V1320.5ZM1226.57 1320.5V941.4H1227.73V1320.5ZM1227.69 1320.5V949.8H1228.85V1320.5ZM1228.81 1320.5V983.5H1229.97V1320.5ZM1229.93 1320.5V983.5H1231.09V1320.5ZM1231.05 1320.5V1025.6H1232.21V1320.5ZM1232.17 1320.5V1185.7H1233.33V1320.5ZM1233.29 1320.5V1152.0H1234.45V1320.5ZM1234.41 1320.5V1211.0H1235.57V1320.5ZM1235.53 1320.5V1211.0H1236.69V1320.5ZM1236.65 1320.5V1211.0H1237.82V1320.5ZM1237.78 1320.5V1219.4H1238.94V1320.5ZM1238.90 1320.5V1202.5H1240.06V1320.5ZM1240.02 1320.5V1042.5H1241.18V1320.5ZM1241.14 1320.5V941.4H1242.30V1320.5ZM1242.26 1320.5V966.6H1243.42V1320.5ZM1243.38 1320.5V966.6H1244.54V1320.5ZM1244.50 1320.5V966.6H1245.66V1320.5ZM1245.62 1320.5V1135.2H1246.78V1320.5ZM1246.74 1320.5V1050.9H1247.90V1320.5ZM1247.86 1320.5V966.6H1249.03V1320.5ZM1248.99 1320.5V966.6H1250.15V1320.5ZM1250.11 1320.5V1093.0H1251.27V1320.5ZM1251.23 1320.5V1185.7H1252.39V1320.5ZM1252.35 1320.5V1244.7H1253.51V1320.5ZM1253.47 1320.5V1236.2H1254.63V1320.5ZM1254.59 1320.5V1219.4H1255.75V1320.5ZM1255.71 1320.5V1211.0H1256.87V1320.5ZM1256.83 1320.5V1211.0H1257.99V1320.5ZM1257.95 1320.5V1244.7H1259.12V1320.5ZM1259.08 1320.5V1227.8H1260.24V1320.5ZM1260.20 1320.5V1253.1H1261.36V1320.5ZM1261.32 1320.5V1261.5H1262.48V1320.5ZM1262.44 1320.5V1152.0H1263.60V1320.5ZM1263.56 1320.5V1084.6H1264.72V1320.5ZM1264.68 1320.5V1143.6H1265.84V1320.5ZM1265.80 1320.5V1143.6H1266.96V1320.5ZM1266.92 1320.5V1093.0H1268.08V1320.5ZM1268.04 1320.5V1152.0H1269.20V1320.5ZM1269.16 1320.5V1194.1H1270.33V1320.5ZM1270.29 1320.5V1236.2H1271.45V1320.5ZM1271.41 1320.5V1236.2H1272.57V1320.5ZM1272.53 1320.5V1202.5H1273.69V1320.5ZM1273.65 1320.5V1219.4H1274.81V1320.5ZM1274.77 1320.5V1227.8H1275.93V1320.5ZM1275.89 1320.5V1219.4H1277.05V1320.5ZM1277.01 1320.5V1211.0H1278.17V1320.5ZM1278.13 1320.5V1177.3H1279.29V1320.5ZM1279.25 1320.5V1093.0H1280.41V1320.5ZM1280.37 1320.5V958.2H1281.54V1320.5ZM1281.50 1320.5V1076.2H1282.66V1320.5ZM1282.62 1320.5V1101.5H1283.78V1320.5ZM1283.74 1320.5V1093.0H1284.90V1320.5ZM1284.86 1320.5V1143.6H1286.02V1320.5ZM1285.98 1320.5V1152.0H1287.14V1320.5ZM1287.10 1320.5V1152.0H1288.26V1320.5ZM1288.22 1320.5V1143.6H1289.38V1320.5ZM1289.34 1320.5V1118.3H1290.50V1320.5ZM1290.46 1320.5V1118.3H1291.63V1320.5ZM1291.59 1320.5V1109.9H1292.75V1320.5ZM1292.71 1320.5V1109.9H1293.87V1320.5ZM1293.83 1320.5V1109.9H1294.99V1320.5ZM1294.95 1320.5V1109.9H1296.11V1320.5ZM1296.07 1320.5V1143.6H1297.23V1320.5ZM1297.19 1320.5V1152.0H1298.35V1320.5ZM1298.31 1320.5V1152.0H1299.47V1320.5ZM1299.43 1320.5V1067.8H1300.59V1320.5ZM1300.55 1320.5V924.5H1301.71V1320.5ZM1301.67 1320.5V941.4H1302.84V1320.5ZM1302.80 1320.5V949.8H1303.96V1320.5ZM1303.92 1320.5V958.2H1305.08V1320.5ZM1305.04 1320.5V1017.2H1306.20V1320.5ZM1306.16 1320.5V975.1H1307.32V1320.5ZM1307.28 1320.5V916.1H1308.44V1320.5ZM1308.40 1320.5V924.5H1309.56V1320.5ZM1309.52 1320.5V1000.3H1310.68V1320.5ZM1310.64 1320.5V983.5H1311.80V1320.5ZM1311.76 1320.5V966.6H1312.92V1320.5ZM1312.88 1320.5V1000.3H1314.05V1320.5ZM1314.01 1320.5V1143.6H1315.17V1320.5ZM1315.13 1320.5V1143.6H1316.29V1320.5ZM1316.25 1320.5V1177.3H1317.41V1320.5ZM1317.37 1320.5V1219.4H1318.53V1320.5ZM1318.49 1320.5V1227.8H1319.65V1320.5ZM1319.61 1320.5V1236.2H1320.77V1320.5ZM1320.73 1320.5V1202.5H1321.89V1320.5ZM1321.85 1320.5V1177.3H1323.01V1320.5ZM1322.97 1320.5V1168.8H1324.14V1320.5ZM1324.10 1320.5V1202.5H1325.26V1320.5ZM1325.22 1320.5V1227.8H1326.38V1320.5ZM1326.34 1320.5V1067.8H1327.50V1320.5ZM1327.46 1320.5V1050.9H1328.62V1320.5ZM1328.58 1320.5V1025.6H1329.74V1320.5ZM1329.70 1320.5V1185.7H1330.86V1320.5ZM1330.82 1320.5V1177.3H1331.98V1320.5ZM1331.94 1320.5V1168.8H1333.10V1320.5ZM1333.06 1320.5V1194.1H1334.22V1320.5ZM1334.18 1320.5V1211.0H1335.35V1320.5ZM1335.31 1320.5V1227.8H1336.47V1320.5ZM1336.43 1320.5V1227.8H1337.59V1320.5ZM1337.55 1320.5V1059.3H1338.71V1320.5ZM1338.67 1320.5V983.5H1339.83V1320.5ZM1339.79 1320.5V991.9H1340.95V1320.5ZM1340.91 1320.5V1008.8H1342.07V1320.5ZM1342.03 1320.5V1135.2H1343.19V1320.5ZM1343.15 1320.5V1135.2H1344.31V1320.5ZM1344.27 1320.5V1135.2H1345.43V1320.5ZM1345.39 1320.5V1143.6H1346.56V1320.5ZM1346.52 1320.5V1135.2H1347.68V1320.5ZM1347.64 1320.5V1143.6H1348.80V1320.5ZM1348.76 1320.5V1160.4H1349.92V1320.5ZM1349.88 1320.5V1152.0H1351.04V1320.5ZM1351.00 1320.5V1152.0H1352.16V1320.5ZM1352.12 1320.5V1177.3H1353.28V1320.5ZM1528.12 1320.5V1126.7H1529.28V1320.5ZM1529.24 1320.5V1126.7H1530.40V1320.5ZM1530.36 1320.5V1202.5H1531.53V1320.5ZM1531.49 1320.5V1000.3H1532.65V1320.5ZM1532.61 1320.5V975.1H1533.77V1320.5ZM1533.73 1320.5V924.5H1534.89V1320.5ZM1534.85 1320.5V1076.2H1536.01V1320.5ZM1535.97 1320.5V1160.4H1537.13V1320.5ZM1537.09 1320.5V1185.7H1538.25V1320.5ZM1538.21 1320.5V1211.0H1539.37V1320.5ZM1539.33 1320.5V1236.2H1540.49V1320.5ZM1540.45 1320.5V1236.2H1541.62V1320.5ZM1541.58 1320.5V1017.2H1542.74V1320.5ZM1542.70 1320.5V975.1H1543.86V1320.5ZM1543.82 1320.5V975.1H1544.98V1320.5ZM1544.94 1320.5V991.9H1546.10V1320.5ZM1546.06 1320.5V1000.3H1547.22V1320.5ZM1547.18 1320.5V1000.3H1548.34V1320.5ZM1548.30 1320.5V1059.3H1549.46V1320.5ZM1549.42 1320.5V975.1H1550.58V1320.5ZM1550.54 1320.5V983.5H1551.70V1320.5ZM1551.66 1320.5V991.9H1552.83V1320.5ZM1552.79 1320.5V1000.3H1553.95V1320.5ZM1553.91 1320.5V1050.9H1555.07V1320.5ZM1555.03 1320.5V1118.3H1556.19V1320.5ZM1556.15 1320.5V1093.0H1557.31V1320.5ZM1557.27 1320.5V1034.0H1558.43V1320.5ZM1558.39 1320.5V958.2H1559.55V1320.5ZM1559.51 1320.5V949.8H1560.67V1320.5ZM1560.63 1320.5V958.2H1561.79V1320.5ZM1561.75 1320.5V958.2H1562.91V1320.5ZM1562.87 1320.5V1059.3H1564.04V1320.5ZM1564.00 1320.5V1126.7H1565.16V1320.5ZM1565.12 1320.5V1152.0H1566.28V1320.5ZM1566.24 1320.5V1143.6H1567.40V1320.5ZM1567.36 1320.5V1160.4H1568.52V1320.5ZM1568.48 1320.5V1244.7H1569.64V1320.5ZM1569.60 1320.5V1042.5H1570.76V1320.5ZM1570.72 1320.5V1042.5H1571.88V1320.5ZM1571.84 1320.5V991.9H1573.00V1320.5ZM1572.96 1320.5V1076.2H1574.13V1320.5ZM1574.09 1320.5V1076.2H1575.25V1320.5ZM1575.21 1320.5V1177.3H1576.37V1320.5ZM1576.33 1320.5V983.5H1577.49V1320.5ZM1577.45 1320.5V975.1H1578.61V1320.5ZM1578.57 1320.5V1076.2H1579.73V1320.5ZM1579.69 1320.5V1059.3H1580.85V1320.5ZM1580.81 1320.5V1135.2H1581.97V1320.5ZM1581.93 1320.5V1126.7H1583.09V1320.5ZM1583.05 1320.5V1126.7H1584.21V1320.5ZM1584.17 1320.5V958.2H1585.34V1320.5ZM1585.30 1320.5V975.1H1586.46V1320.5ZM1586.42 1320.5V975.1H1587.58V1320.5ZM1587.54 1320.5V975.1H1588.70V1320.5ZM1588.66 1320.5V1084.6H1589.82V1320.5ZM1589.78 1320.5V1211.0H1590.94V1320.5ZM1590.90 1320.5V1227.8H1592.06V1320.5ZM1592.02 1320.5V1227.8H1593.18V1320.5ZM1593.14 1320.5V1194.1H1594.30V1320.5ZM1594.26 1320.5V1168.8H1595.42V1320.5ZM1595.38 1320.5V1168.8H1596.55V1320.5ZM1596.51 1320.5V1143.6H1597.67V1320.5ZM1597.63 1320.5V1152.0H1598.79V1320.5ZM1598.75 1320.5V1152.0H1599.91V1320.5ZM1599.87 1320.5V1152.0H1601.03V1320.5ZM1600.99 1320.5V1025.6H1602.15V1320.5ZM1602.11 1320.5V975.1H1603.27V1320.5ZM1603.23 1320.5V1084.6H1604.39V1320.5ZM1604.35 1320.5V1084.6H1605.51V1320.5ZM1605.47 1320.5V1101.5H1606.64V1320.5ZM1606.60 1320.5V1126.7H1607.76V1320.5ZM1607.72 1320.5V1152.0H1608.88V1320.5ZM1608.84 1320.5V1135.2H1610.00V1320.5ZM1609.96 1320.5V1135.2H1611.12V1320.5ZM1611.08 1320.5V1118.3H1612.24V1320.5ZM1612.20 1320.5V1143.6H1613.36V1320.5ZM1613.32 1320.5V1143.6H1614.48V1320.5ZM1614.44 1320.5V1143.6H1615.60V1320.5ZM1615.56 1320.5V1194.1H1616.72V1320.5ZM1616.68 1320.5V1227.8H1617.85V1320.5ZM1617.81 1320.5V1042.5H1618.97V1320.5ZM1618.93 1320.5V1042.5H1620.09V1320.5ZM1620.05 1320.5V1017.2H1621.21V1320.5ZM1621.17 1320.5V1143.6H1622.33V1320.5ZM1622.29 1320.5V1143.6H1623.45V1320.5ZM1623.41 1320.5V1143.6H1624.57V1320.5ZM1624.53 1320.5V1143.6H1625.69V1320.5ZM1625.65 1320.5V1194.1H1626.81V1320.5ZM1626.77 1320.5V1160.4H1627.93V1320.5ZM1627.89 1320.5V1126.7H1629.06V1320.5ZM1629.02 1320.5V1008.8H1630.18V1320.5ZM1630.14 1320.5V941.4H1631.30V1320.5ZM1631.26 1320.5V941.4H1632.42V1320.5ZM1632.38 1320.5V874.0H1633.54V1320.5ZM1633.50 1320.5V975.1H1634.66V1320.5ZM1634.62 1320.5V1050.9H1635.78V1320.5ZM1635.74 1320.5V1168.8H1636.90V1320.5ZM1636.86 1320.5V1126.7H1638.02V1320.5ZM1637.98 1320.5V1135.2H1639.14V1320.5ZM1639.11 1320.5V983.5H1640.27V1320.5ZM1640.23 1320.5V1042.5H1641.39V1320.5ZM1641.35 1320.5V1084.6H1642.51V1320.5ZM1642.47 1320.5V1143.6H1643.63V1320.5ZM1643.59 1320.5V1194.1H1644.75V1320.5ZM1644.71 1320.5V1185.7H1645.87V1320.5ZM1645.83 1320.5V1185.7H1646.99V1320.5ZM1646.95 1320.5V1211.0H1648.11V1320.5ZM1648.07 1320.5V1211.0H1649.23V1320.5ZM1649.19 1320.5V1211.0H1650.36V1320.5ZM1650.32 1320.5V1168.8H1651.48V1320.5ZM1651.44 1320.5V1160.4H1652.60V1320.5ZM1652.56 1320.5V1126.7H1653.72V1320.5ZM1653.68 1320.5V1084.6H1654.84V1320.5ZM1654.80 1320.5V1143.6H1655.96V1320.5ZM1655.92 1320.5V1143.6H1657.08V1320.5ZM1657.04 1320.5V1067.8H1658.20V1320.5ZM1658.16 1320.5V916.1H1659.32V1320.5ZM1659.28 1320.5V1059.3H1660.44V1320.5ZM1660.40 1320.5V882.4H1661.57V1320.5ZM1661.53 1320.5V1008.8H1662.69V1320.5ZM1662.65 1320.5V1101.5H1663.81V1320.5ZM1663.77 1320.5V1109.9H1664.93V1320.5ZM1664.89 1320.5V1109.9H1666.05V1320.5ZM1666.01 1320.5V1109.9H1667.17V1320.5ZM1667.13 1320.5V1143.6H1668.29V1320.5ZM1668.25 1320.5V1118.3H1669.41V1320.5ZM1669.37 1320.5V1118.3H1670.53V1320.5ZM1670.49 1320.5V1118.3H1671.65V1320.5ZM1671.61 1320.5V1126.7H1672.78V1320.5ZM1672.74 1320.5V1126.7H1673.90V1320.5ZM1673.86 1320.5V1143.6H1675.02V1320.5ZM1674.98 1320.5V1219.4H1676.14V1320.5Z" fill="#239071"/>
<path d="M155.2 815.0V1321.3" stroke="#737373" stroke-width="1.8" fill="none"/>
<path d="M154.3 1321.2H2416.0" stroke="#7a7a7a" stroke-width="1.6" fill="none"/>
<text x="134" y="1327.4" text-anchor="end" font-family="DejaVu Sans, Verdana, sans-serif" font-size="20" fill="#444" stroke="#444" stroke-width="0.25">0</text>
<text x="134" y="1243.4" text-anchor="end" font-family="DejaVu Sans, Verdana, sans-serif" font-size="20" fill="#444" stroke="#444" stroke-width="0.25">10</text>
<text x="134" y="1159.4" text-anchor="end" font-family="DejaVu Sans, Verdana, sans-serif" font-size="20" fill="#444" stroke="#444" stroke-width="0.25">20</text>
<text x="134" y="1075.4" text-anchor="end" font-family="DejaVu Sans, Verdana, sans-serif" font-size="20" fill="#444" stroke="#444" stroke-width="0.25">30</text>
<text x="134" y="991.4" text-anchor="end" font-family="DejaVu Sans, Verdana, sans-serif" font-size="20" fill="#444" stroke="#444" stroke-width="0.25">40</text>
<text x="134" y="906.4" text-anchor="end" font-family="DejaVu Sans, Verdana, sans-serif" font-size="20" fill="#444" stroke="#444" stroke-width="0.25">50</text>
<text x="134" y="822.4" text-anchor="end" font-family="DejaVu Sans, Verdana, sans-serif" font-size="20" fill="#444" stroke="#444" stroke-width="0.25">60</text>
<path d="M143.5 1320.2H154.3M143.5 1236.2H154.3M143.5 1152.2H154.3M143.5 1068.2H154.3M143.5 984.2H154.3M143.5 899.2H154.3M143.5 815.2H154.3" stroke="#a8a8a8" stroke-width="1.5" fill="none"/>
<text x="156.3" y="1356.7" text-anchor="middle" font-family="DejaVu Sans, Verdana, sans-serif" font-size="20" fill="#111" stroke="#111" stroke-width="0.3">lun. 06</text>
<text x="479.3" y="1356.7" text-anchor="middle" font-family="DejaVu Sans, Verdana, sans-serif" font-size="20" fill="#111" stroke="#111" stroke-width="0.3">mar. 07</text>
<text x="802.3" y="1356.7" text-anchor="middle" font-family="DejaVu Sans, Verdana, sans-serif" font-size="20" fill="#111" stroke="#111" stroke-width="0.3">mer. 08</text>
<text x="1125.3" y="1356.7" text-anchor="middle" font-family="DejaVu Sans, Verdana, sans-serif" font-size="20" fill="#111" stroke="#111" stroke-width="0.3">jeu. 09</text>
<text x="1447.3" y="1356.7" text-anchor="middle" font-family="DejaVu Sans, Verdana, sans-serif" font-size="20" fill="#111" stroke="#111" stroke-width="0.3">ven. 10</text>
<text x="1770.3" y="1356.7" text-anchor="middle" font-family="DejaVu Sans, Verdana, sans-serif" font-size="20" fill="#111" stroke="#111" stroke-width="0.3">sam. 11</text>
<text x="2093.3" y="1356.7" text-anchor="middle" font-family="DejaVu Sans, Verdana, sans-serif" font-size="20" fill="#111" stroke="#111" stroke-width="0.3">dim. 12</text>
<path d="M156.3 1322.0V1333.0M479.3 1322.0V1333.0M802.3 1322.0V1333.0M1125.3 1322.0V1333.0M1447.3 1322.0V1333.0M1770.3 1322.0V1333.0M2093.3 1322.0V1333.0" stroke="#a8a8a8" stroke-width="1.4" fill="none"/>
<text transform="translate(85.8 1067.2) rotate(-90)" text-anchor="middle" font-family="DejaVu Sans Condensed, DejaVu Sans, Tahoma, sans-serif" font-size="22" textLength="31" lengthAdjust="spacingAndGlyphs" fill="#3c3c3c">kW</text>
<rect x="562" y="806" width="412" height="58" rx="10" fill="#fff" stroke="#808080" stroke-width="4"/>
<text x="778" y="845.8" text-anchor="middle" font-family="DejaVu Sans Condensed, DejaVu Sans, Tahoma, sans-serif" font-size="27" textLength="339.5" lengthAdjust="spacingAndGlyphs" fill="#000" stroke="#000" stroke-width="0.35">Consommation: 1 173 kWh</text>
<rect x="1100.3" y="806" width="412.0" height="58" rx="10" fill="#fff" stroke="#808080" stroke-width="4"/>
<text x="1316" y="845.8" text-anchor="middle" font-family="DejaVu Sans Condensed, DejaVu Sans, Tahoma, sans-serif" font-size="27" textLength="193" lengthAdjust="spacingAndGlyphs" fill="#000" stroke="#000" stroke-width="0.35">P Max :  53 kW</text>
<rect x="1610.3" y="806" width="412.0" height="58" rx="10" fill="#fff" stroke="#808080" stroke-width="4"/>
<text x="1826" y="845.8" text-anchor="middle" font-family="DejaVu Sans Condensed, DejaVu Sans, Tahoma, sans-serif" font-size="27" textLength="164.5" lengthAdjust="spacingAndGlyphs" fill="#000" stroke="#000" stroke-width="0.35">P min : 1 kW</text>
<g id="g2e">
<rect x="2322.5" y="1322" width="115.5" height="56.5" fill="#fff"/>
<text x="2332.3" y="1363.2" font-family="Liberation Sans, Arial, sans-serif" font-weight="bold" font-size="42" textLength="34" lengthAdjust="spacingAndGlyphs" fill="#1474bb">G</text>
<text x="2365.6" y="1363.2" font-family="Liberation Sans, Arial, sans-serif" font-weight="bold" font-size="31" textLength="22" lengthAdjust="spacingAndGlyphs" fill="#1474bb">2</text>
<path d="M2392.2 1324.6L2383.8 1337.8L2389.8 1339.2L2388.6 1363.5L2395.5 1336.3L2390.2 1335.2Z" fill="#e8602c"/>
<path d="M2399.5 1338.5H2424.6L2421.4 1344H2397.8ZM2396.6 1347.7H2419.3L2416.1 1353.2H2394.9ZM2393.8 1357.6H2413.8L2410.7 1363.1H2392.2Z" fill="#f6921e"/>
<text x="2395.5" y="1334.6" font-family="Liberation Sans, Arial, sans-serif" font-weight="bold" font-size="7" textLength="28" lengthAdjust="spacingAndGlyphs" fill="#e8602c">FRANCE</text>
<text x="2339.5" y="1368.3" font-family="Liberation Sans, Arial, sans-serif" font-size="3.6" textLength="74.5" lengthAdjust="spacingAndGlyphs" fill="#1474bb">Optimisation des ressources énergétiques</text>
</g>
</svg></body></html>
